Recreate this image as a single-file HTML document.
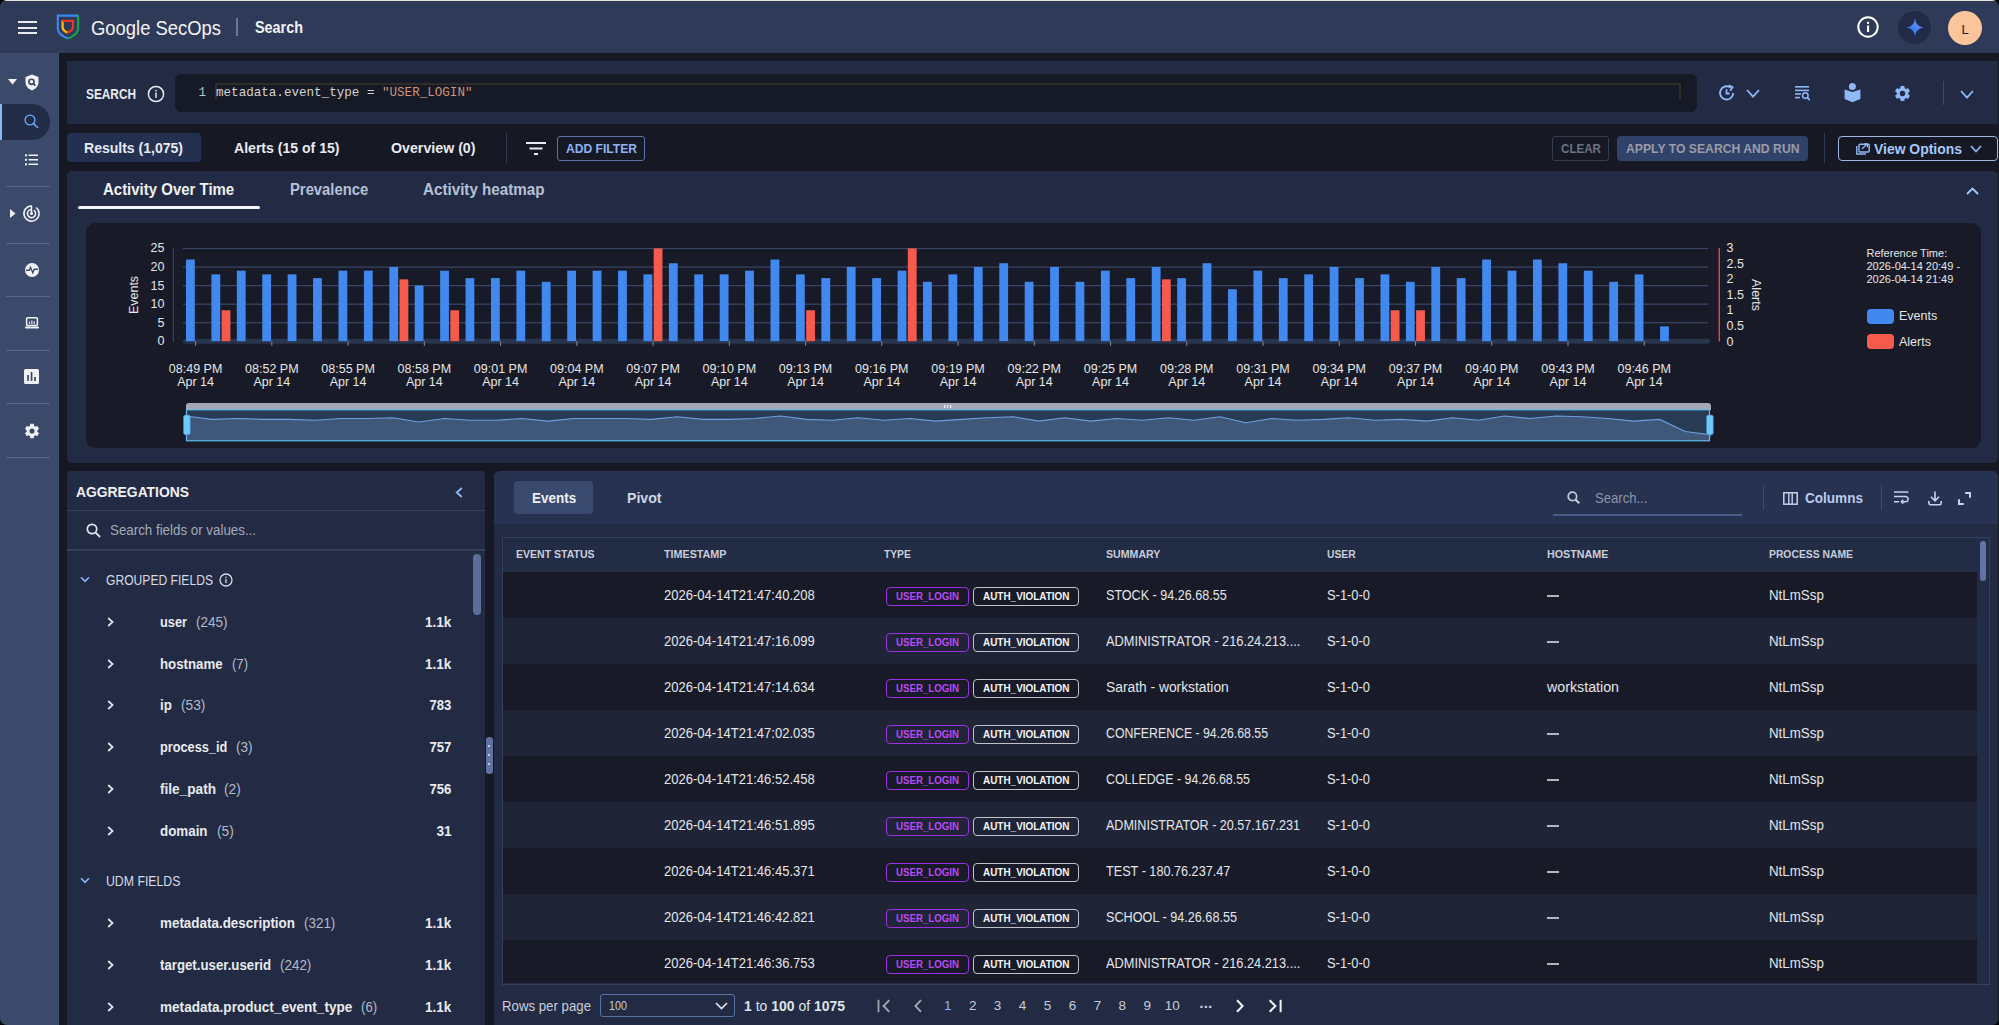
<!DOCTYPE html>
<html><head><meta charset="utf-8"><title>Google SecOps Search</title>
<style>
html,body{margin:0;padding:0;background:#000;width:1999px;height:1025px;overflow:hidden;}
.a{position:absolute;}
#app{position:absolute;left:0;top:0;width:1999px;height:1025px;overflow:hidden;border-radius:7px;background:#161824;font-family:'Liberation Sans', sans-serif;}
svg{position:absolute;overflow:visible;}
</style></head><body><div id="app">
<div class="a" style="left:0px;top:0px;width:1999px;height:1px;background:#e6e6e0;"></div>
<div class="a" style="left:0px;top:1px;width:1999px;height:52px;background:#2e3a58;"></div>
<div class="a" style="left:17.5px;top:21px;width:19px;height:2px;background:#e8eaf0;"></div>
<div class="a" style="left:17.5px;top:26.5px;width:19px;height:2px;background:#e8eaf0;"></div>
<div class="a" style="left:17.5px;top:31.5px;width:19px;height:2px;background:#e8eaf0;"></div>
<svg style="left:52px;top:10px" width="32" height="34" viewBox="0 0 32 34">
<path d="M15.9 28.6 C10.8 26.6 5.8 23 5.8 18.6 V5.6 H25.6" stroke="#3d86f5" stroke-width="2.1" fill="none"/>
<path d="M26 4.6 V18.6 C26 23 21 26.6 15.9 28.6" stroke="#0fa84a" stroke-width="2.1" fill="none"/>
<path d="M10.6 10 V17.2 C10.6 19.6 12.5 21.3 15.8 22.6" stroke="#fbbc04" stroke-width="2.3" fill="none"/>
<path d="M10.4 10.9 H20.9 V17.2 C20.9 19.6 18.7 21.3 15.2 22.8" stroke="#ee3228" stroke-width="2.3" fill="none"/>
</svg>
<div class="a" style="left:91px;top:14.50px;height:26px;line-height:26px;font-size:20px;font-weight:400;color:#f2f3f5;font-family:'Liberation Sans', sans-serif;white-space:nowrap;transform:scaleX(0.9207);transform-origin:left center;">Google SecOps</div>
<div class="a" style="left:236px;top:18px;width:1.5px;height:18px;background:#6a7796;"></div>
<div class="a" style="left:255px;top:16.50px;height:22px;line-height:22px;font-size:17px;font-weight:700;color:#f2f3f5;font-family:'Liberation Sans', sans-serif;white-space:nowrap;transform:scaleX(0.8465);transform-origin:left center;">Search</div>
<svg style="left:1857px;top:16px" width="22" height="22" viewBox="0 0 22 22">
<circle cx="11" cy="11" r="9.7" stroke="#fff" stroke-width="2" fill="none"/>
<rect x="10" y="9.5" width="2.1" height="6.5" fill="#fff"/><rect x="10" y="5.8" width="2.1" height="2.1" fill="#fff"/></svg>
<div class="a" style="left:1898px;top:11px;width:33px;height:33px;background:#222b46;border-radius:17px;"></div>
<svg style="left:1906px;top:18px" width="18" height="19" viewBox="0 0 18 19">
<defs><linearGradient id="gg" x1="0" y1="1" x2="1" y2="0"><stop offset="0.35" stop-color="#2f7cf6"/><stop offset="0.65" stop-color="#5f8af7"/><stop offset="1" stop-color="#c49af0"/></linearGradient></defs>
<path d="M9 0 C9.6 5.5 12 8.6 17.5 9.5 C12 10.4 9.6 13.5 9 19 C8.4 13.5 6 10.4 0.5 9.5 C6 8.6 8.4 5.5 9 0Z" fill="url(#gg)"/></svg>
<div class="a" style="left:1948px;top:10.5px;width:34px;height:34px;background:#fcc49a;border-radius:17px;"></div>
<div class="a" style="left:1465px;width:1000px;text-align:center;top:19.50px;height:17px;"><span style="display:inline-block;line-height:17px;font-size:13px;font-weight:400;color:#1a1a1a;font-family:'Liberation Sans', sans-serif;white-space:nowrap;">L</span></div>
<div class="a" style="left:0px;top:53px;width:58.6px;height:972px;background:#3b496b;"></div>
<div class="a" style="left:67px;top:61px;width:1931px;height:62.8px;background:#222b43;border-radius:1px;"></div>
<svg style="left:8px;top:79px" width="9" height="6" viewBox="0 0 9 6"><path d="M0 0H9L4.5 5.5Z" fill="#f0f2f7"/></svg>
<svg style="left:25px;top:74px" width="14" height="17" viewBox="0 0 14 17">
<path d="M7 0.5 L13.5 3 V8 C13.5 12 10.8 15 7 16.5 C3.2 15 0.5 12 0.5 8 V3 Z" fill="#f0f2f7"/>
<circle cx="6.5" cy="7.8" r="2.6" stroke="#3b496b" stroke-width="1.6" fill="none"/>
<path d="M8.3 9.6 L10.3 11.6" stroke="#3b496b" stroke-width="1.7"/></svg>
<div class="a" style="left:0px;top:103.5px;width:50px;height:36px;background:#222c46;border-radius:0 18px 18px 0;"></div>
<div class="a" style="left:0px;top:103.5px;width:1.5px;height:36px;background:#8ab4f8;"></div>
<svg style="left:24px;top:114px" width="15" height="15" viewBox="0 0 15 15">
<circle cx="6" cy="6" r="4.9" stroke="#6aa5f8" stroke-width="1.4" fill="none"/>
<path d="M9.6 9.6 L14 14" stroke="#6aa5f8" stroke-width="1.5"/></svg>
<svg style="left:25px;top:154px" width="13" height="12" viewBox="0 0 13 12">
<rect x="0" y="0.3" width="2" height="2" fill="#f0f2f7"/><rect x="3.5" y="0.5" width="9.5" height="1.5" fill="#f0f2f7"/>
<rect x="0" y="4.8" width="2" height="2" fill="#f0f2f7"/><rect x="3.5" y="5" width="9.5" height="1.5" fill="#f0f2f7"/>
<rect x="0" y="9.3" width="2" height="2" fill="#f0f2f7"/><rect x="3.5" y="9.5" width="9.5" height="1.5" fill="#f0f2f7"/></svg>
<div class="a" style="left:6px;top:186px;width:44px;height:1.3px;background:#55658e;"></div>
<div class="a" style="left:6px;top:242.5px;width:44px;height:1.3px;background:#55658e;"></div>
<div class="a" style="left:6px;top:296px;width:44px;height:1.3px;background:#55658e;"></div>
<div class="a" style="left:6px;top:349.5px;width:44px;height:1.3px;background:#55658e;"></div>
<div class="a" style="left:6px;top:403px;width:44px;height:1.3px;background:#55658e;"></div>
<div class="a" style="left:6px;top:456.5px;width:44px;height:1.3px;background:#55658e;"></div>
<svg style="left:10px;top:209px" width="6" height="9" viewBox="0 0 6 9"><path d="M0 0V9L5.5 4.5Z" fill="#f0f2f7"/></svg>
<svg style="left:22.75px;top:205px" width="17" height="17" viewBox="0 0 17 17">
<path d="M13.18 2.51 A7.6 7.6 0 1 1 8.50 0.90" stroke="#f0f2f7" stroke-width="1.5" fill="none"/>
<path d="M10.85 5.14 A4.1 4.1 0 1 1 8.50 4.40" stroke="#f0f2f7" stroke-width="1.5" fill="none"/>
<circle cx="8.5" cy="8.5" r="1.5" fill="#f0f2f7"/><path d="M8.5 8.5 V0.6" stroke="#f0f2f7" stroke-width="1.4"/></svg>
<svg style="left:24.5px;top:263px" width="14" height="14" viewBox="0 0 14 14">
<circle cx="7" cy="7" r="7" fill="#f0f2f7"/>
<path d="M1 7.3 H4.2 L5.6 4.5 L7.8 9.8 L9.3 6.3 H13" stroke="#3b496b" stroke-width="1.4" fill="none"/></svg>
<svg style="left:24.5px;top:317px" width="14" height="12" viewBox="0 0 14 12">
<rect x="1.6" y="0.8" width="10.8" height="7.6" rx="1" stroke="#f0f2f7" stroke-width="1.5" fill="none"/>
<rect x="4" y="4.6" width="1.1" height="2.5" fill="#f0f2f7"/><rect x="6.3" y="3.4" width="1.1" height="3.7" fill="#f0f2f7"/><rect x="8.6" y="4.2" width="1.1" height="2.9" fill="#f0f2f7"/>
<rect x="0" y="9.6" width="14" height="1.8" rx="0.9" fill="#f0f2f7"/></svg>
<svg style="left:24px;top:369px" width="15" height="15" viewBox="0 0 15 15">
<rect x="0" y="0" width="15" height="15" rx="1.5" fill="#f0f2f7"/>
<rect x="3.2" y="6" width="1.7" height="6" fill="#3b496b"/><rect x="6.7" y="3" width="1.7" height="9" fill="#3b496b"/><rect x="10.2" y="8" width="1.7" height="4" fill="#3b496b"/></svg>
<svg style="left:22.5px;top:421.5px" width="18" height="18" viewBox="0 0 24 24">
<path fill="#f0f2f7" d="M19.14 12.94c.04-.3.06-.61.06-.94 0-.32-.02-.64-.07-.94l2.03-1.58c.18-.14.23-.41.12-.61l-1.92-3.32c-.12-.22-.37-.29-.59-.22l-2.39.96c-.5-.38-1.03-.7-1.62-.94l-.36-2.54c-.04-.24-.24-.41-.48-.41h-3.84c-.24 0-.43.17-.47.41l-.36 2.54c-.59.24-1.13.57-1.62.94l-2.39-.96c-.22-.08-.47 0-.59.22L2.74 8.87c-.12.21-.08.47.12.61l2.03 1.58c-.05.3-.09.63-.09.94s.02.64.07.94l-2.03 1.58c-.18.14-.23.41-.12.61l1.92 3.32c.12.22.37.29.59.22l2.39-.96c.5.38 1.03.7 1.62.94l.36 2.54c.05.24.24.41.48.41h3.84c.24 0 .44-.17.47-.41l.36-2.54c.59-.24 1.13-.56 1.62-.94l2.39.96c.22.08.47 0 .59-.22l1.92-3.32c.12-.22.07-.47-.12-.61l-2.01-1.58z"/>
<circle cx="12" cy="12" r="3.4" fill="#3b496b"/></svg>
<div class="a" style="left:86px;top:84.50px;height:18px;line-height:18px;font-size:14px;font-weight:700;color:#e8eaf0;font-family:'Liberation Sans', sans-serif;white-space:nowrap;transform:scaleX(0.8457);transform-origin:left center;">SEARCH</div>
<svg style="left:146.5px;top:84.5px" width="18" height="18" viewBox="0 0 18 18">
<circle cx="9" cy="9" r="7.6" stroke="#e8eaf0" stroke-width="1.5" fill="none"/>
<rect x="8.25" y="7.6" width="1.5" height="5.2" fill="#e8eaf0"/><rect x="8.25" y="4.9" width="1.5" height="1.6" fill="#e8eaf0"/></svg>
<div class="a" style="left:174.5px;top:74.2px;width:1522.5px;height:37.4px;background:#161a26;border-radius:6px;"></div>
<div class="a" style="left:198.5px;top:85.00px;height:16px;line-height:16px;font-size:12.6px;font-weight:400;color:#b8bcc6;font-family:'Liberation Mono', monospace;white-space:nowrap;">1</div>
<div class="a" style="left:215.3px;top:83px;width:1466px;height:16.5px;box-sizing:border-box;border:2px solid #2f2d28;border-bottom:none;"></div>
<div class="a" style="left:216px;top:85.20px;height:16px;line-height:16px;font-size:12.6px;font-weight:400;color:#d4d4d4;font-family:'Liberation Mono', monospace;white-space:nowrap;transform:scaleX(0.9982);transform-origin:left center;">metadata.event_type = <span style="color:#ce9178">"USER_LOGIN"</span></div>
<svg style="left:1718px;top:84px" width="18" height="18" viewBox="0 0 18 18">
<path d="M15.2 9 A6.6 6.6 0 1 1 12.6 3.7" stroke="#8fb8f8" stroke-width="1.9" fill="none"/>
<path d="M10.6 1.2 L14.6 3.2 L12.2 6.8" stroke="#8fb8f8" stroke-width="1.8" fill="none"/>
<path d="M8.5 5.2 V9.5 H11.6" stroke="#8fb8f8" stroke-width="1.8" fill="none"/></svg>
<svg style="left:1745.5px;top:88.5px" width="14" height="9.700000000000001" viewBox="0 0 14 9.700000000000001"><path d="M1 1 L7.0 7.700000000000001 L13 1" stroke="#8fb8f8" stroke-width="1.8" fill="none"/></svg>
<svg style="left:1795px;top:86px" width="16" height="15" viewBox="0 0 16 15">
<rect x="0" y="0" width="14" height="1.6" fill="#8fb8f8"/><rect x="0" y="3.6" width="14" height="1.6" fill="#8fb8f8"/>
<rect x="0" y="7.2" width="6" height="1.6" fill="#8fb8f8"/><rect x="0" y="10.8" width="5" height="1.6" fill="#8fb8f8"/>
<circle cx="10.3" cy="9.6" r="2.8" stroke="#8fb8f8" stroke-width="1.5" fill="none"/><path d="M12.3 11.6 L14.8 14.1" stroke="#8fb8f8" stroke-width="1.6"/></svg>
<svg style="left:1844px;top:82px" width="17" height="21" viewBox="0 0 17 21">
<circle cx="8.4" cy="4.6" r="3.5" fill="#8fb8f8"/>
<path d="M0.6 7.6 L8.4 10 L16.4 7.6 V17 L8.4 20.2 L0.6 17 Z" fill="#8fb8f8"/></svg>
<svg style="left:1893px;top:84px" width="19" height="19" viewBox="0 0 24 24">
<path fill="#8fb8f8" d="M19.14 12.94c.04-.3.06-.61.06-.94 0-.32-.02-.64-.07-.94l2.03-1.58c.18-.14.23-.41.12-.61l-1.92-3.32c-.12-.22-.37-.29-.59-.22l-2.39.96c-.5-.38-1.03-.7-1.62-.94l-.36-2.54c-.04-.24-.24-.41-.48-.41h-3.84c-.24 0-.43.17-.47.41l-.36 2.54c-.59.24-1.13.57-1.62.94l-2.39-.96c-.22-.08-.47 0-.59.22L2.74 8.87c-.12.21-.08.47.12.61l2.03 1.58c-.05.3-.09.63-.09.94s.02.64.07.94l-2.03 1.58c-.18.14-.23.41-.12.61l1.92 3.32c.12.22.37.29.59.22l2.39-.96c.5.38 1.03.7 1.62.94l.36 2.54c.05.24.24.41.48.41h3.84c.24 0 .44-.17.47-.41l.36-2.54c.59-.24 1.13-.56 1.62-.94l2.39.96c.22.08.47 0 .59-.22l1.92-3.32c.12-.22.07-.47-.12-.61l-2.01-1.58z"/>
<circle cx="12" cy="12" r="3.4" fill="#222b43"/></svg>
<div class="a" style="left:1943px;top:80.5px;width:1px;height:24px;background:#3a4766;"></div>
<svg style="left:1960px;top:89.8px" width="14" height="9.700000000000001" viewBox="0 0 14 9.700000000000001"><path d="M1 1 L7.0 7.700000000000001 L13 1" stroke="#8fb8f8" stroke-width="1.8" fill="none"/></svg>
<div class="a" style="left:67px;top:133px;width:133.5px;height:28.7px;background:#243050;border-radius:4px;"></div>
<div class="a" style="left:84px;top:138.50px;height:18px;line-height:18px;font-size:14px;font-weight:700;color:#e8eaf0;font-family:'Liberation Sans', sans-serif;white-space:nowrap;transform:scaleX(1.0017);transform-origin:left center;">Results (1,075)</div>
<div class="a" style="left:233.5px;top:138.50px;height:18px;line-height:18px;font-size:14px;font-weight:700;color:#e8eaf0;font-family:'Liberation Sans', sans-serif;white-space:nowrap;transform:scaleX(1.0043);transform-origin:left center;">Alerts (15 of 15)</div>
<div class="a" style="left:390.5px;top:138.50px;height:18px;line-height:18px;font-size:14px;font-weight:700;color:#e8eaf0;font-family:'Liberation Sans', sans-serif;white-space:nowrap;transform:scaleX(1.0148);transform-origin:left center;">Overview (0)</div>
<div class="a" style="left:506px;top:133px;width:1px;height:30px;background:#2e3852;"></div>
<svg style="left:526px;top:142px" width="20" height="14" viewBox="0 0 20 14">
<rect x="0" y="0" width="20" height="2" fill="#e8eaf0"/><rect x="3.5" y="5.5" width="13" height="2" fill="#e8eaf0"/><rect x="8" y="11" width="4" height="2" fill="#e8eaf0"/></svg>
<div class="a" style="left:557px;top:136px;width:88px;height:25px;border-radius:3px;box-sizing:border-box;border:1px solid #5b72a8;"></div>
<div class="a" style="left:565.5px;top:140.00px;height:17px;line-height:17px;font-size:13px;font-weight:700;color:#8fb4f5;font-family:'Liberation Sans', sans-serif;white-space:nowrap;transform:scaleX(0.9304);transform-origin:left center;">ADD FILTER</div>
<div class="a" style="left:1552px;top:136px;width:57px;height:25px;border-radius:3px;box-sizing:border-box;border:1px solid #343c50;"></div>
<div class="a" style="left:1560.5px;top:140.00px;height:17px;line-height:17px;font-size:13px;font-weight:700;color:#6b7386;font-family:'Liberation Sans', sans-serif;white-space:nowrap;transform:scaleX(0.8932);transform-origin:left center;">CLEAR</div>
<div class="a" style="left:1617px;top:136px;width:190.5px;height:25px;background:#30416a;border-radius:4px;"></div>
<div class="a" style="left:1625.5px;top:140.00px;height:17px;line-height:17px;font-size:13px;font-weight:700;color:#9a9ca8;font-family:'Liberation Sans', sans-serif;white-space:nowrap;transform:scaleX(0.9382);transform-origin:left center;">APPLY TO SEARCH AND RUN</div>
<div class="a" style="left:1824px;top:132.5px;width:1px;height:30.5px;background:#2e3852;"></div>
<div class="a" style="left:1838px;top:136px;width:159.5px;height:25px;border-radius:4px;box-sizing:border-box;border:1.2px solid #9fb5e2;"></div>
<svg style="left:1856px;top:141.5px" width="14" height="13" viewBox="0 0 14 13">
<path d="M0.8 4 V12 H10" stroke="#8fb8f8" stroke-width="1.4" fill="none"/>
<rect x="3" y="2.2" width="10.2" height="7.8" rx="1" stroke="#8fb8f8" stroke-width="1.4" fill="none"/>
<path d="M6 7 L10.5 2.5 M8 2 H11.5 V5.5" stroke="#8fb8f8" stroke-width="1.3" fill="none"/></svg>
<div class="a" style="left:1874px;top:139.50px;height:18px;line-height:18px;font-size:14px;font-weight:700;color:#a8c7fa;font-family:'Liberation Sans', sans-serif;white-space:nowrap;transform:scaleX(0.9951);transform-origin:left center;">View Options</div>
<svg style="left:1969.5px;top:144.5px" width="12" height="8.600000000000001" viewBox="0 0 12 8.600000000000001"><path d="M1 1 L6.0 6.6000000000000005 L11 1" stroke="#8fb8f8" stroke-width="1.7" fill="none"/></svg>
<div class="a" style="left:67px;top:170.9px;width:1931px;height:292.5px;background:#222b43;border-radius:5px;"></div>
<div class="a" style="left:103.3px;top:178.50px;height:21px;line-height:21px;font-size:16px;font-weight:700;color:#eef0f5;font-family:'Liberation Sans', sans-serif;white-space:nowrap;transform:scaleX(0.9357);transform-origin:left center;">Activity Over Time</div>
<div class="a" style="left:289.8px;top:178.50px;height:21px;line-height:21px;font-size:16px;font-weight:700;color:#b6c0d6;font-family:'Liberation Sans', sans-serif;white-space:nowrap;transform:scaleX(0.9253);transform-origin:left center;">Prevalence</div>
<div class="a" style="left:423px;top:178.50px;height:21px;line-height:21px;font-size:16px;font-weight:700;color:#b6c0d6;font-family:'Liberation Sans', sans-serif;white-space:nowrap;transform:scaleX(0.9489);transform-origin:left center;">Activity heatmap</div>
<div class="a" style="left:78px;top:205.5px;width:182px;height:3.4px;background:#f4f5f8;border-radius:2px;"></div>
<svg style="left:1965.8px;top:186.5px" width="13" height="8" viewBox="0 0 13 8"><path d="M1 7 L6.5 1.5 L12 7" stroke="#a8c7fa" stroke-width="1.9" fill="none"/></svg>
<div class="a" style="left:85.5px;top:223px;width:1895px;height:225px;background:#181b27;border-radius:9px;"></div>
<svg style="left:0;top:0" width="1999" height="1025" viewBox="0 0 1999 1025"><rect x="183" y="322.14" width="1525" height="1.2" fill="#3a4768"/><rect x="183" y="303.58" width="1525" height="1.2" fill="#3a4768"/><rect x="183" y="285.02" width="1525" height="1.2" fill="#3a4768"/><rect x="183" y="266.46" width="1525" height="1.2" fill="#3a4768"/><rect x="183" y="247.90" width="1525" height="1.2" fill="#3a4768"/><rect x="172.8" y="248" width="1.1" height="93.5" fill="#3a4768"/><rect x="1718.6" y="248" width="1.4" height="93.5" fill="#e8453c"/><rect x="183" y="338.8" width="1527" height="5" rx="2.5" fill="#29344d"/><rect x="186.00" y="259.54" width="8.8" height="81.66" fill="#4189ee"/><rect x="195.10" y="341" width="1" height="5" fill="#7d8496"/><rect x="211.41" y="274.38" width="8.8" height="66.82" fill="#4189ee"/><rect x="221.61" y="310.27" width="8.8" height="30.93" fill="#f65a4c"/><rect x="236.83" y="270.67" width="8.8" height="70.53" fill="#4189ee"/><rect x="262.25" y="274.38" width="8.8" height="66.82" fill="#4189ee"/><rect x="271.35" y="341" width="1" height="5" fill="#7d8496"/><rect x="287.66" y="274.38" width="8.8" height="66.82" fill="#4189ee"/><rect x="313.07" y="278.10" width="8.8" height="63.10" fill="#4189ee"/><rect x="338.49" y="270.67" width="8.8" height="70.53" fill="#4189ee"/><rect x="347.59" y="341" width="1" height="5" fill="#7d8496"/><rect x="363.90" y="270.67" width="8.8" height="70.53" fill="#4189ee"/><rect x="389.32" y="266.96" width="8.8" height="74.24" fill="#4189ee"/><rect x="399.52" y="279.33" width="8.8" height="61.87" fill="#f65a4c"/><rect x="414.73" y="285.52" width="8.8" height="55.68" fill="#4189ee"/><rect x="423.83" y="341" width="1" height="5" fill="#7d8496"/><rect x="440.15" y="270.67" width="8.8" height="70.53" fill="#4189ee"/><rect x="450.35" y="310.27" width="8.8" height="30.93" fill="#f65a4c"/><rect x="465.56" y="278.10" width="8.8" height="63.10" fill="#4189ee"/><rect x="490.98" y="278.10" width="8.8" height="63.10" fill="#4189ee"/><rect x="500.08" y="341" width="1" height="5" fill="#7d8496"/><rect x="516.39" y="270.67" width="8.8" height="70.53" fill="#4189ee"/><rect x="541.81" y="281.81" width="8.8" height="59.39" fill="#4189ee"/><rect x="567.22" y="270.67" width="8.8" height="70.53" fill="#4189ee"/><rect x="576.32" y="341" width="1" height="5" fill="#7d8496"/><rect x="592.64" y="270.67" width="8.8" height="70.53" fill="#4189ee"/><rect x="618.05" y="270.67" width="8.8" height="70.53" fill="#4189ee"/><rect x="643.47" y="274.38" width="8.8" height="66.82" fill="#4189ee"/><rect x="653.67" y="248.40" width="8.8" height="92.80" fill="#f65a4c"/><rect x="652.57" y="341" width="1" height="5" fill="#7d8496"/><rect x="668.88" y="263.25" width="8.8" height="77.95" fill="#4189ee"/><rect x="694.30" y="274.38" width="8.8" height="66.82" fill="#4189ee"/><rect x="719.72" y="274.38" width="8.8" height="66.82" fill="#4189ee"/><rect x="728.82" y="341" width="1" height="5" fill="#7d8496"/><rect x="745.13" y="270.67" width="8.8" height="70.53" fill="#4189ee"/><rect x="770.54" y="259.54" width="8.8" height="81.66" fill="#4189ee"/><rect x="795.96" y="274.38" width="8.8" height="66.82" fill="#4189ee"/><rect x="806.16" y="310.27" width="8.8" height="30.93" fill="#f65a4c"/><rect x="805.06" y="341" width="1" height="5" fill="#7d8496"/><rect x="821.38" y="278.10" width="8.8" height="63.10" fill="#4189ee"/><rect x="846.79" y="266.96" width="8.8" height="74.24" fill="#4189ee"/><rect x="872.20" y="278.10" width="8.8" height="63.10" fill="#4189ee"/><rect x="881.30" y="341" width="1" height="5" fill="#7d8496"/><rect x="897.62" y="270.67" width="8.8" height="70.53" fill="#4189ee"/><rect x="907.82" y="248.40" width="8.8" height="92.80" fill="#f65a4c"/><rect x="923.03" y="281.81" width="8.8" height="59.39" fill="#4189ee"/><rect x="948.45" y="274.38" width="8.8" height="66.82" fill="#4189ee"/><rect x="957.55" y="341" width="1" height="5" fill="#7d8496"/><rect x="973.87" y="266.96" width="8.8" height="74.24" fill="#4189ee"/><rect x="999.28" y="263.25" width="8.8" height="77.95" fill="#4189ee"/><rect x="1024.69" y="281.81" width="8.8" height="59.39" fill="#4189ee"/><rect x="1033.79" y="341" width="1" height="5" fill="#7d8496"/><rect x="1050.11" y="266.96" width="8.8" height="74.24" fill="#4189ee"/><rect x="1075.53" y="281.81" width="8.8" height="59.39" fill="#4189ee"/><rect x="1100.94" y="270.67" width="8.8" height="70.53" fill="#4189ee"/><rect x="1110.04" y="341" width="1" height="5" fill="#7d8496"/><rect x="1126.36" y="278.10" width="8.8" height="63.10" fill="#4189ee"/><rect x="1151.77" y="266.96" width="8.8" height="74.24" fill="#4189ee"/><rect x="1161.97" y="279.33" width="8.8" height="61.87" fill="#f65a4c"/><rect x="1177.18" y="278.10" width="8.8" height="63.10" fill="#4189ee"/><rect x="1186.28" y="341" width="1" height="5" fill="#7d8496"/><rect x="1202.60" y="263.25" width="8.8" height="77.95" fill="#4189ee"/><rect x="1228.01" y="289.23" width="8.8" height="51.97" fill="#4189ee"/><rect x="1253.43" y="270.67" width="8.8" height="70.53" fill="#4189ee"/><rect x="1262.53" y="341" width="1" height="5" fill="#7d8496"/><rect x="1278.85" y="278.10" width="8.8" height="63.10" fill="#4189ee"/><rect x="1304.26" y="274.38" width="8.8" height="66.82" fill="#4189ee"/><rect x="1329.67" y="266.96" width="8.8" height="74.24" fill="#4189ee"/><rect x="1338.77" y="341" width="1" height="5" fill="#7d8496"/><rect x="1355.09" y="278.10" width="8.8" height="63.10" fill="#4189ee"/><rect x="1380.50" y="274.38" width="8.8" height="66.82" fill="#4189ee"/><rect x="1390.70" y="310.27" width="8.8" height="30.93" fill="#f65a4c"/><rect x="1405.92" y="281.81" width="8.8" height="59.39" fill="#4189ee"/><rect x="1416.12" y="310.27" width="8.8" height="30.93" fill="#f65a4c"/><rect x="1415.02" y="341" width="1" height="5" fill="#7d8496"/><rect x="1431.34" y="266.96" width="8.8" height="74.24" fill="#4189ee"/><rect x="1456.75" y="278.10" width="8.8" height="63.10" fill="#4189ee"/><rect x="1482.16" y="259.54" width="8.8" height="81.66" fill="#4189ee"/><rect x="1491.26" y="341" width="1" height="5" fill="#7d8496"/><rect x="1507.58" y="270.67" width="8.8" height="70.53" fill="#4189ee"/><rect x="1532.99" y="259.54" width="8.8" height="81.66" fill="#4189ee"/><rect x="1558.41" y="263.25" width="8.8" height="77.95" fill="#4189ee"/><rect x="1567.51" y="341" width="1" height="5" fill="#7d8496"/><rect x="1583.83" y="270.67" width="8.8" height="70.53" fill="#4189ee"/><rect x="1609.24" y="281.81" width="8.8" height="59.39" fill="#4189ee"/><rect x="1634.65" y="274.38" width="8.8" height="66.82" fill="#4189ee"/><rect x="1643.75" y="341" width="1" height="5" fill="#7d8496"/><rect x="1660.07" y="326.35" width="8.8" height="14.85" fill="#4189ee"/></svg>
<div class="a" style="right:1834.5px;top:334.20px;height:14px;line-height:14px;font-size:12.5px;font-weight:400;color:#e6e6e6;font-family:'Liberation Sans', sans-serif;white-space:nowrap;">0</div>
<div class="a" style="right:1834.5px;top:315.64px;height:14px;line-height:14px;font-size:12.5px;font-weight:400;color:#e6e6e6;font-family:'Liberation Sans', sans-serif;white-space:nowrap;">5</div>
<div class="a" style="right:1834.5px;top:297.08px;height:14px;line-height:14px;font-size:12.5px;font-weight:400;color:#e6e6e6;font-family:'Liberation Sans', sans-serif;white-space:nowrap;">10</div>
<div class="a" style="right:1834.5px;top:278.52px;height:14px;line-height:14px;font-size:12.5px;font-weight:400;color:#e6e6e6;font-family:'Liberation Sans', sans-serif;white-space:nowrap;">15</div>
<div class="a" style="right:1834.5px;top:259.96px;height:14px;line-height:14px;font-size:12.5px;font-weight:400;color:#e6e6e6;font-family:'Liberation Sans', sans-serif;white-space:nowrap;">20</div>
<div class="a" style="right:1834.5px;top:241.40px;height:14px;line-height:14px;font-size:12.5px;font-weight:400;color:#e6e6e6;font-family:'Liberation Sans', sans-serif;white-space:nowrap;">25</div>
<div class="a" style="left:1726.5px;top:334.50px;height:14px;line-height:14px;font-size:12.5px;font-weight:400;color:#e6e6e6;font-family:'Liberation Sans', sans-serif;white-space:nowrap;">0</div>
<div class="a" style="left:1726.5px;top:318.95px;height:14px;line-height:14px;font-size:12.5px;font-weight:400;color:#e6e6e6;font-family:'Liberation Sans', sans-serif;white-space:nowrap;">0.5</div>
<div class="a" style="left:1726.5px;top:303.40px;height:14px;line-height:14px;font-size:12.5px;font-weight:400;color:#e6e6e6;font-family:'Liberation Sans', sans-serif;white-space:nowrap;">1</div>
<div class="a" style="left:1726.5px;top:287.85px;height:14px;line-height:14px;font-size:12.5px;font-weight:400;color:#e6e6e6;font-family:'Liberation Sans', sans-serif;white-space:nowrap;">1.5</div>
<div class="a" style="left:1726.5px;top:272.30px;height:14px;line-height:14px;font-size:12.5px;font-weight:400;color:#e6e6e6;font-family:'Liberation Sans', sans-serif;white-space:nowrap;">2</div>
<div class="a" style="left:1726.5px;top:256.75px;height:14px;line-height:14px;font-size:12.5px;font-weight:400;color:#e6e6e6;font-family:'Liberation Sans', sans-serif;white-space:nowrap;">2.5</div>
<div class="a" style="left:1726.5px;top:241.20px;height:14px;line-height:14px;font-size:12.5px;font-weight:400;color:#e6e6e6;font-family:'Liberation Sans', sans-serif;white-space:nowrap;">3</div>
<div class="a" style="left:94px;top:287px;width:80px;height:16px;line-height:16px;text-align:center;font-size:12.5px;color:#e6e6e6;transform:rotate(-90deg);">Events</div>
<div class="a" style="left:1716px;top:287px;width:80px;height:16px;line-height:16px;text-align:center;font-size:12.5px;color:#e6e6e6;transform:rotate(90deg);">Alerts</div>
<div class="a" style="left:-304.4px;width:1000px;text-align:center;top:358.80px;height:14px;"><span style="display:inline-block;line-height:14px;font-size:12.5px;font-weight:400;color:#e6e6e6;font-family:'Liberation Sans', sans-serif;white-space:nowrap;">08:49 PM</span></div>
<div class="a" style="left:-304.4px;width:1000px;text-align:center;top:372.00px;height:14px;"><span style="display:inline-block;line-height:14px;font-size:12.5px;font-weight:400;color:#e6e6e6;font-family:'Liberation Sans', sans-serif;white-space:nowrap;">Apr 14</span></div>
<div class="a" style="left:-228.15499999999997px;width:1000px;text-align:center;top:358.80px;height:14px;"><span style="display:inline-block;line-height:14px;font-size:12.5px;font-weight:400;color:#e6e6e6;font-family:'Liberation Sans', sans-serif;white-space:nowrap;">08:52 PM</span></div>
<div class="a" style="left:-228.15499999999997px;width:1000px;text-align:center;top:372.00px;height:14px;"><span style="display:inline-block;line-height:14px;font-size:12.5px;font-weight:400;color:#e6e6e6;font-family:'Liberation Sans', sans-serif;white-space:nowrap;">Apr 14</span></div>
<div class="a" style="left:-151.90999999999997px;width:1000px;text-align:center;top:358.80px;height:14px;"><span style="display:inline-block;line-height:14px;font-size:12.5px;font-weight:400;color:#e6e6e6;font-family:'Liberation Sans', sans-serif;white-space:nowrap;">08:55 PM</span></div>
<div class="a" style="left:-151.90999999999997px;width:1000px;text-align:center;top:372.00px;height:14px;"><span style="display:inline-block;line-height:14px;font-size:12.5px;font-weight:400;color:#e6e6e6;font-family:'Liberation Sans', sans-serif;white-space:nowrap;">Apr 14</span></div>
<div class="a" style="left:-75.66500000000002px;width:1000px;text-align:center;top:358.80px;height:14px;"><span style="display:inline-block;line-height:14px;font-size:12.5px;font-weight:400;color:#e6e6e6;font-family:'Liberation Sans', sans-serif;white-space:nowrap;">08:58 PM</span></div>
<div class="a" style="left:-75.66500000000002px;width:1000px;text-align:center;top:372.00px;height:14px;"><span style="display:inline-block;line-height:14px;font-size:12.5px;font-weight:400;color:#e6e6e6;font-family:'Liberation Sans', sans-serif;white-space:nowrap;">Apr 14</span></div>
<div class="a" style="left:0.5800000000000409px;width:1000px;text-align:center;top:358.80px;height:14px;"><span style="display:inline-block;line-height:14px;font-size:12.5px;font-weight:400;color:#e6e6e6;font-family:'Liberation Sans', sans-serif;white-space:nowrap;">09:01 PM</span></div>
<div class="a" style="left:0.5800000000000409px;width:1000px;text-align:center;top:372.00px;height:14px;"><span style="display:inline-block;line-height:14px;font-size:12.5px;font-weight:400;color:#e6e6e6;font-family:'Liberation Sans', sans-serif;white-space:nowrap;">Apr 14</span></div>
<div class="a" style="left:76.82499999999993px;width:1000px;text-align:center;top:358.80px;height:14px;"><span style="display:inline-block;line-height:14px;font-size:12.5px;font-weight:400;color:#e6e6e6;font-family:'Liberation Sans', sans-serif;white-space:nowrap;">09:04 PM</span></div>
<div class="a" style="left:76.82499999999993px;width:1000px;text-align:center;top:372.00px;height:14px;"><span style="display:inline-block;line-height:14px;font-size:12.5px;font-weight:400;color:#e6e6e6;font-family:'Liberation Sans', sans-serif;white-space:nowrap;">Apr 14</span></div>
<div class="a" style="left:153.06999999999994px;width:1000px;text-align:center;top:358.80px;height:14px;"><span style="display:inline-block;line-height:14px;font-size:12.5px;font-weight:400;color:#e6e6e6;font-family:'Liberation Sans', sans-serif;white-space:nowrap;">09:07 PM</span></div>
<div class="a" style="left:153.06999999999994px;width:1000px;text-align:center;top:372.00px;height:14px;"><span style="display:inline-block;line-height:14px;font-size:12.5px;font-weight:400;color:#e6e6e6;font-family:'Liberation Sans', sans-serif;white-space:nowrap;">Apr 14</span></div>
<div class="a" style="left:229.31500000000005px;width:1000px;text-align:center;top:358.80px;height:14px;"><span style="display:inline-block;line-height:14px;font-size:12.5px;font-weight:400;color:#e6e6e6;font-family:'Liberation Sans', sans-serif;white-space:nowrap;">09:10 PM</span></div>
<div class="a" style="left:229.31500000000005px;width:1000px;text-align:center;top:372.00px;height:14px;"><span style="display:inline-block;line-height:14px;font-size:12.5px;font-weight:400;color:#e6e6e6;font-family:'Liberation Sans', sans-serif;white-space:nowrap;">Apr 14</span></div>
<div class="a" style="left:305.56000000000006px;width:1000px;text-align:center;top:358.80px;height:14px;"><span style="display:inline-block;line-height:14px;font-size:12.5px;font-weight:400;color:#e6e6e6;font-family:'Liberation Sans', sans-serif;white-space:nowrap;">09:13 PM</span></div>
<div class="a" style="left:305.56000000000006px;width:1000px;text-align:center;top:372.00px;height:14px;"><span style="display:inline-block;line-height:14px;font-size:12.5px;font-weight:400;color:#e6e6e6;font-family:'Liberation Sans', sans-serif;white-space:nowrap;">Apr 14</span></div>
<div class="a" style="left:381.80499999999995px;width:1000px;text-align:center;top:358.80px;height:14px;"><span style="display:inline-block;line-height:14px;font-size:12.5px;font-weight:400;color:#e6e6e6;font-family:'Liberation Sans', sans-serif;white-space:nowrap;">09:16 PM</span></div>
<div class="a" style="left:381.80499999999995px;width:1000px;text-align:center;top:372.00px;height:14px;"><span style="display:inline-block;line-height:14px;font-size:12.5px;font-weight:400;color:#e6e6e6;font-family:'Liberation Sans', sans-serif;white-space:nowrap;">Apr 14</span></div>
<div class="a" style="left:458.04999999999995px;width:1000px;text-align:center;top:358.80px;height:14px;"><span style="display:inline-block;line-height:14px;font-size:12.5px;font-weight:400;color:#e6e6e6;font-family:'Liberation Sans', sans-serif;white-space:nowrap;">09:19 PM</span></div>
<div class="a" style="left:458.04999999999995px;width:1000px;text-align:center;top:372.00px;height:14px;"><span style="display:inline-block;line-height:14px;font-size:12.5px;font-weight:400;color:#e6e6e6;font-family:'Liberation Sans', sans-serif;white-space:nowrap;">Apr 14</span></div>
<div class="a" style="left:534.2949999999998px;width:1000px;text-align:center;top:358.80px;height:14px;"><span style="display:inline-block;line-height:14px;font-size:12.5px;font-weight:400;color:#e6e6e6;font-family:'Liberation Sans', sans-serif;white-space:nowrap;">09:22 PM</span></div>
<div class="a" style="left:534.2949999999998px;width:1000px;text-align:center;top:372.00px;height:14px;"><span style="display:inline-block;line-height:14px;font-size:12.5px;font-weight:400;color:#e6e6e6;font-family:'Liberation Sans', sans-serif;white-space:nowrap;">Apr 14</span></div>
<div class="a" style="left:610.54px;width:1000px;text-align:center;top:358.80px;height:14px;"><span style="display:inline-block;line-height:14px;font-size:12.5px;font-weight:400;color:#e6e6e6;font-family:'Liberation Sans', sans-serif;white-space:nowrap;">09:25 PM</span></div>
<div class="a" style="left:610.54px;width:1000px;text-align:center;top:372.00px;height:14px;"><span style="display:inline-block;line-height:14px;font-size:12.5px;font-weight:400;color:#e6e6e6;font-family:'Liberation Sans', sans-serif;white-space:nowrap;">Apr 14</span></div>
<div class="a" style="left:686.7849999999999px;width:1000px;text-align:center;top:358.80px;height:14px;"><span style="display:inline-block;line-height:14px;font-size:12.5px;font-weight:400;color:#e6e6e6;font-family:'Liberation Sans', sans-serif;white-space:nowrap;">09:28 PM</span></div>
<div class="a" style="left:686.7849999999999px;width:1000px;text-align:center;top:372.00px;height:14px;"><span style="display:inline-block;line-height:14px;font-size:12.5px;font-weight:400;color:#e6e6e6;font-family:'Liberation Sans', sans-serif;white-space:nowrap;">Apr 14</span></div>
<div class="a" style="left:763.03px;width:1000px;text-align:center;top:358.80px;height:14px;"><span style="display:inline-block;line-height:14px;font-size:12.5px;font-weight:400;color:#e6e6e6;font-family:'Liberation Sans', sans-serif;white-space:nowrap;">09:31 PM</span></div>
<div class="a" style="left:763.03px;width:1000px;text-align:center;top:372.00px;height:14px;"><span style="display:inline-block;line-height:14px;font-size:12.5px;font-weight:400;color:#e6e6e6;font-family:'Liberation Sans', sans-serif;white-space:nowrap;">Apr 14</span></div>
<div class="a" style="left:839.2749999999999px;width:1000px;text-align:center;top:358.80px;height:14px;"><span style="display:inline-block;line-height:14px;font-size:12.5px;font-weight:400;color:#e6e6e6;font-family:'Liberation Sans', sans-serif;white-space:nowrap;">09:34 PM</span></div>
<div class="a" style="left:839.2749999999999px;width:1000px;text-align:center;top:372.00px;height:14px;"><span style="display:inline-block;line-height:14px;font-size:12.5px;font-weight:400;color:#e6e6e6;font-family:'Liberation Sans', sans-serif;white-space:nowrap;">Apr 14</span></div>
<div class="a" style="left:915.52px;width:1000px;text-align:center;top:358.80px;height:14px;"><span style="display:inline-block;line-height:14px;font-size:12.5px;font-weight:400;color:#e6e6e6;font-family:'Liberation Sans', sans-serif;white-space:nowrap;">09:37 PM</span></div>
<div class="a" style="left:915.52px;width:1000px;text-align:center;top:372.00px;height:14px;"><span style="display:inline-block;line-height:14px;font-size:12.5px;font-weight:400;color:#e6e6e6;font-family:'Liberation Sans', sans-serif;white-space:nowrap;">Apr 14</span></div>
<div class="a" style="left:991.7649999999999px;width:1000px;text-align:center;top:358.80px;height:14px;"><span style="display:inline-block;line-height:14px;font-size:12.5px;font-weight:400;color:#e6e6e6;font-family:'Liberation Sans', sans-serif;white-space:nowrap;">09:40 PM</span></div>
<div class="a" style="left:991.7649999999999px;width:1000px;text-align:center;top:372.00px;height:14px;"><span style="display:inline-block;line-height:14px;font-size:12.5px;font-weight:400;color:#e6e6e6;font-family:'Liberation Sans', sans-serif;white-space:nowrap;">Apr 14</span></div>
<div class="a" style="left:1068.0099999999998px;width:1000px;text-align:center;top:358.80px;height:14px;"><span style="display:inline-block;line-height:14px;font-size:12.5px;font-weight:400;color:#e6e6e6;font-family:'Liberation Sans', sans-serif;white-space:nowrap;">09:43 PM</span></div>
<div class="a" style="left:1068.0099999999998px;width:1000px;text-align:center;top:372.00px;height:14px;"><span style="display:inline-block;line-height:14px;font-size:12.5px;font-weight:400;color:#e6e6e6;font-family:'Liberation Sans', sans-serif;white-space:nowrap;">Apr 14</span></div>
<div class="a" style="left:1144.2549999999999px;width:1000px;text-align:center;top:358.80px;height:14px;"><span style="display:inline-block;line-height:14px;font-size:12.5px;font-weight:400;color:#e6e6e6;font-family:'Liberation Sans', sans-serif;white-space:nowrap;">09:46 PM</span></div>
<div class="a" style="left:1144.2549999999999px;width:1000px;text-align:center;top:372.00px;height:14px;"><span style="display:inline-block;line-height:14px;font-size:12.5px;font-weight:400;color:#e6e6e6;font-family:'Liberation Sans', sans-serif;white-space:nowrap;">Apr 14</span></div>
<div class="a" style="left:1866.5px;top:247.10px;height:13px;line-height:13px;font-size:11px;font-weight:400;color:#e6e6e6;font-family:'Liberation Sans', sans-serif;white-space:nowrap;">Reference Time:</div>
<div class="a" style="left:1866.5px;top:260.10px;height:13px;line-height:13px;font-size:11px;font-weight:400;color:#e6e6e6;font-family:'Liberation Sans', sans-serif;white-space:nowrap;">2026-04-14 20:49 -</div>
<div class="a" style="left:1866.5px;top:273.10px;height:13px;line-height:13px;font-size:11px;font-weight:400;color:#e6e6e6;font-family:'Liberation Sans', sans-serif;white-space:nowrap;">2026-04-14 21:49</div>
<div class="a" style="left:1867px;top:309px;width:26.5px;height:14.8px;background:#4189ee;border-radius:4px;"></div>
<div class="a" style="left:1899px;top:309.40px;height:14px;line-height:14px;font-size:12.5px;font-weight:400;color:#e6e6e6;font-family:'Liberation Sans', sans-serif;white-space:nowrap;">Events</div>
<div class="a" style="left:1867px;top:334px;width:26.5px;height:14.8px;background:#f65a4c;border-radius:4px;"></div>
<div class="a" style="left:1899px;top:334.50px;height:14px;line-height:14px;font-size:12.5px;font-weight:400;color:#e6e6e6;font-family:'Liberation Sans', sans-serif;white-space:nowrap;">Alerts</div>
<div class="a" style="left:185.8px;top:403px;width:1525px;height:6.8px;background:#a3a7b6;border-radius:3px 3px 0 0;"></div>
<svg style="left:944px;top:404.5px" width="8" height="4" viewBox="0 0 8 4"><rect x="0" y="0" width="1.2" height="3" fill="#eef0f6"/><rect x="3" y="0" width="1.2" height="3" fill="#eef0f6"/><rect x="6" y="0" width="1.2" height="3" fill="#eef0f6"/></svg>
<svg style="left:0;top:0" width="1999" height="1025" viewBox="0 0 1999 1025">
<rect x="186.5" y="410" width="1523" height="31" fill="#283b55"/>
<path d="M186.5 441 L186.0 416.0 L211.8 419.4 L237.7 418.5 L263.6 419.4 L289.4 419.4 L315.2 420.3 L341.1 418.5 L367.0 418.5 L392.8 417.7 L418.6 422.0 L444.5 418.5 L470.4 420.3 L496.2 420.3 L522.0 418.5 L547.9 421.1 L573.8 418.5 L599.6 418.5 L625.5 418.5 L651.3 419.4 L677.2 416.8 L703.0 419.4 L728.9 419.4 L754.7 418.5 L780.6 416.0 L806.4 419.4 L832.2 420.3 L858.1 417.7 L884.0 420.3 L909.8 418.5 L935.7 421.1 L961.5 419.4 L987.4 417.7 L1013.2 416.8 L1039.1 421.1 L1064.9 417.7 L1090.8 421.1 L1116.6 418.5 L1142.5 420.3 L1168.3 417.7 L1194.2 420.3 L1220.0 416.8 L1245.9 422.8 L1271.7 418.5 L1297.5 420.3 L1323.4 419.4 L1349.2 417.7 L1375.1 420.3 L1401.0 419.4 L1426.8 421.1 L1452.7 417.7 L1478.5 420.3 L1504.4 416.0 L1530.2 418.5 L1556.1 416.0 L1581.9 416.8 L1607.8 418.5 L1633.6 421.1 L1659.5 419.4 L1685.3 431.5 L1711.2 434.9 L1709.5 441 Z" fill="#3f5879"/>
<path d="M186.0 416.0 L211.8 419.4 L237.7 418.5 L263.6 419.4 L289.4 419.4 L315.2 420.3 L341.1 418.5 L367.0 418.5 L392.8 417.7 L418.6 422.0 L444.5 418.5 L470.4 420.3 L496.2 420.3 L522.0 418.5 L547.9 421.1 L573.8 418.5 L599.6 418.5 L625.5 418.5 L651.3 419.4 L677.2 416.8 L703.0 419.4 L728.9 419.4 L754.7 418.5 L780.6 416.0 L806.4 419.4 L832.2 420.3 L858.1 417.7 L884.0 420.3 L909.8 418.5 L935.7 421.1 L961.5 419.4 L987.4 417.7 L1013.2 416.8 L1039.1 421.1 L1064.9 417.7 L1090.8 421.1 L1116.6 418.5 L1142.5 420.3 L1168.3 417.7 L1194.2 420.3 L1220.0 416.8 L1245.9 422.8 L1271.7 418.5 L1297.5 420.3 L1323.4 419.4 L1349.2 417.7 L1375.1 420.3 L1401.0 419.4 L1426.8 421.1 L1452.7 417.7 L1478.5 420.3 L1504.4 416.0 L1530.2 418.5 L1556.1 416.0 L1581.9 416.8 L1607.8 418.5 L1633.6 421.1 L1659.5 419.4 L1685.3 431.5 L1711.2 434.9" stroke="#6c9fe0" stroke-width="1.1" fill="none"/>
<rect x="186.5" y="409.8" width="1523" height="31" stroke="#62b8ea" stroke-width="1.2" fill="none"/>
<rect x="183.5" y="415" width="6.8" height="19.8" rx="2" fill="#6ec8fa" stroke="#3d8ac0" stroke-width="0.6"/>
<rect x="1706.5" y="415" width="6.8" height="19.8" rx="2" fill="#6ec8fa" stroke="#3d8ac0" stroke-width="0.6"/>
</svg>
<div class="a" style="left:67px;top:471.3px;width:418px;height:560px;background:#222b43;border-radius:4px;"></div>
<div class="a" style="left:76.4px;top:481.80px;height:20px;line-height:20px;font-size:15px;font-weight:700;color:#eef0f5;font-family:'Liberation Sans', sans-serif;white-space:nowrap;transform:scaleX(0.9245);transform-origin:left center;">AGGREGATIONS</div>
<svg style="left:455px;top:486.5px" width="8" height="11" viewBox="0 0 8 11"><path d="M6.8 1 L1.8 5.5 L6.8 10" stroke="#8ab4f8" stroke-width="1.9" fill="none"/></svg>
<div class="a" style="left:67px;top:509.8px;width:418px;height:1.5px;background:#34405e;"></div>
<svg style="left:85.5px;top:522.5px" width="15" height="15" viewBox="0 0 15 15">
<circle cx="6" cy="6" r="4.7" stroke="#dfe3ea" stroke-width="1.7" fill="none"/><path d="M9.4 9.4 L14 14" stroke="#dfe3ea" stroke-width="1.9"/></svg>
<div class="a" style="left:110px;top:521.00px;height:18px;line-height:18px;font-size:14px;font-weight:400;color:#a3a9b8;font-family:'Liberation Sans', sans-serif;white-space:nowrap;transform:scaleX(0.9524);transform-origin:left center;">Search fields or values...</div>
<div class="a" style="left:67px;top:549px;width:418px;height:1.5px;background:#34405e;"></div>
<div class="a" style="left:472.8px;top:553.7px;width:8.2px;height:61px;background:#5d6d98;border-radius:4.1px;"></div>
<svg style="left:80px;top:576.0px" width="10" height="7" viewBox="0 0 10 7"><path d="M1 1.2 L5 5.4 L9 1.2" stroke="#8ab4f8" stroke-width="1.6" fill="none"/></svg>
<div class="a" style="left:105.7px;top:571.00px;height:18px;line-height:18px;font-size:14px;font-weight:400;color:#d6dae3;font-family:'Liberation Sans', sans-serif;white-space:nowrap;transform:scaleX(0.8650);transform-origin:left center;">GROUPED FIELDS</div>
<svg style="left:218.5px;top:573px" width="14" height="14" viewBox="0 0 14 14">
<circle cx="7" cy="7" r="6" stroke="#d6dae3" stroke-width="1.3" fill="none"/>
<rect x="6.35" y="5.9" width="1.3" height="4.2" fill="#d6dae3"/><rect x="6.35" y="3.7" width="1.3" height="1.3" fill="#d6dae3"/></svg>
<svg style="left:106.5px;top:616.6px" width="7" height="10" viewBox="0 0 7 10"><path d="M1.2 1 L5.6 5 L1.2 9" stroke="#dfe3ea" stroke-width="1.7" fill="none"/></svg>
<div class="a" style="left:160.2px;top:612.60px;height:18px;line-height:18px;font-size:14px;font-weight:700;color:#e8eaf0;font-family:'Liberation Sans', sans-serif;white-space:nowrap;transform:scaleX(0.9128);transform-origin:left center;">user</div>
<div class="a" style="left:195.8px;top:612.60px;height:18px;line-height:18px;font-size:14px;font-weight:400;color:#b3b9c7;font-family:'Liberation Sans', sans-serif;white-space:nowrap;transform:scaleX(0.9667);transform-origin:left center;">(245)</div>
<div class="a" style="right:1547.4px;top:612.60px;height:18px;line-height:18px;font-size:14px;font-weight:700;color:#e8eaf0;font-family:'Liberation Sans', sans-serif;white-space:nowrap;transform:scaleX(0.9651);transform-origin:right center;">1.1k</div>
<svg style="left:106.5px;top:658.7px" width="7" height="10" viewBox="0 0 7 10"><path d="M1.2 1 L5.6 5 L1.2 9" stroke="#dfe3ea" stroke-width="1.7" fill="none"/></svg>
<div class="a" style="left:160.2px;top:654.70px;height:18px;line-height:18px;font-size:14px;font-weight:700;color:#e8eaf0;font-family:'Liberation Sans', sans-serif;white-space:nowrap;transform:scaleX(0.9467);transform-origin:left center;">hostname</div>
<div class="a" style="left:231.7px;top:654.70px;height:18px;line-height:18px;font-size:14px;font-weight:400;color:#b3b9c7;font-family:'Liberation Sans', sans-serif;white-space:nowrap;transform:scaleX(0.9343);transform-origin:left center;">(7)</div>
<div class="a" style="right:1547.4px;top:654.70px;height:18px;line-height:18px;font-size:14px;font-weight:700;color:#e8eaf0;font-family:'Liberation Sans', sans-serif;white-space:nowrap;transform:scaleX(0.9651);transform-origin:right center;">1.1k</div>
<svg style="left:106.5px;top:700.3px" width="7" height="10" viewBox="0 0 7 10"><path d="M1.2 1 L5.6 5 L1.2 9" stroke="#dfe3ea" stroke-width="1.7" fill="none"/></svg>
<div class="a" style="left:160.2px;top:696.30px;height:18px;line-height:18px;font-size:14px;font-weight:700;color:#e8eaf0;font-family:'Liberation Sans', sans-serif;white-space:nowrap;transform:scaleX(0.9476);transform-origin:left center;">ip</div>
<div class="a" style="left:180.5px;top:696.30px;height:18px;line-height:18px;font-size:14px;font-weight:400;color:#b3b9c7;font-family:'Liberation Sans', sans-serif;white-space:nowrap;transform:scaleX(0.9757);transform-origin:left center;">(53)</div>
<div class="a" style="right:1547.4px;top:696.30px;height:18px;line-height:18px;font-size:14px;font-weight:700;color:#e8eaf0;font-family:'Liberation Sans', sans-serif;white-space:nowrap;transform:scaleX(0.9375);transform-origin:right center;">783</div>
<svg style="left:106.5px;top:742.3px" width="7" height="10" viewBox="0 0 7 10"><path d="M1.2 1 L5.6 5 L1.2 9" stroke="#dfe3ea" stroke-width="1.7" fill="none"/></svg>
<div class="a" style="left:160.2px;top:738.30px;height:18px;line-height:18px;font-size:14px;font-weight:700;color:#e8eaf0;font-family:'Liberation Sans', sans-serif;white-space:nowrap;transform:scaleX(0.9102);transform-origin:left center;">process_id</div>
<div class="a" style="left:236px;top:738.30px;height:18px;line-height:18px;font-size:14px;font-weight:400;color:#b3b9c7;font-family:'Liberation Sans', sans-serif;white-space:nowrap;transform:scaleX(0.9693);transform-origin:left center;">(3)</div>
<div class="a" style="right:1547.4px;top:738.30px;height:18px;line-height:18px;font-size:14px;font-weight:700;color:#e8eaf0;font-family:'Liberation Sans', sans-serif;white-space:nowrap;transform:scaleX(0.9375);transform-origin:right center;">757</div>
<svg style="left:106.5px;top:784.4px" width="7" height="10" viewBox="0 0 7 10"><path d="M1.2 1 L5.6 5 L1.2 9" stroke="#dfe3ea" stroke-width="1.7" fill="none"/></svg>
<div class="a" style="left:160.2px;top:780.40px;height:18px;line-height:18px;font-size:14px;font-weight:700;color:#e8eaf0;font-family:'Liberation Sans', sans-serif;white-space:nowrap;transform:scaleX(0.9726);transform-origin:left center;">file_path</div>
<div class="a" style="left:224.3px;top:780.40px;height:18px;line-height:18px;font-size:14px;font-weight:400;color:#b3b9c7;font-family:'Liberation Sans', sans-serif;white-space:nowrap;transform:scaleX(0.9810);transform-origin:left center;">(2)</div>
<div class="a" style="right:1547.4px;top:780.40px;height:18px;line-height:18px;font-size:14px;font-weight:700;color:#e8eaf0;font-family:'Liberation Sans', sans-serif;white-space:nowrap;transform:scaleX(0.9375);transform-origin:right center;">756</div>
<svg style="left:106.5px;top:825.8px" width="7" height="10" viewBox="0 0 7 10"><path d="M1.2 1 L5.6 5 L1.2 9" stroke="#dfe3ea" stroke-width="1.7" fill="none"/></svg>
<div class="a" style="left:160.2px;top:821.80px;height:18px;line-height:18px;font-size:14px;font-weight:700;color:#e8eaf0;font-family:'Liberation Sans', sans-serif;white-space:nowrap;transform:scaleX(0.9542);transform-origin:left center;">domain</div>
<div class="a" style="left:216.6px;top:821.80px;height:18px;line-height:18px;font-size:14px;font-weight:400;color:#b3b9c7;font-family:'Liberation Sans', sans-serif;white-space:nowrap;transform:scaleX(0.9810);transform-origin:left center;">(5)</div>
<div class="a" style="right:1547.4px;top:821.80px;height:18px;line-height:18px;font-size:14px;font-weight:700;color:#e8eaf0;font-family:'Liberation Sans', sans-serif;white-space:nowrap;transform:scaleX(0.9757);transform-origin:right center;">31</div>
<svg style="left:106.5px;top:918px" width="7" height="10" viewBox="0 0 7 10"><path d="M1.2 1 L5.6 5 L1.2 9" stroke="#dfe3ea" stroke-width="1.7" fill="none"/></svg>
<div class="a" style="left:160.2px;top:914.00px;height:18px;line-height:18px;font-size:14px;font-weight:700;color:#e8eaf0;font-family:'Liberation Sans', sans-serif;white-space:nowrap;transform:scaleX(0.9586);transform-origin:left center;">metadata.description</div>
<div class="a" style="left:304.1px;top:914.00px;height:18px;line-height:18px;font-size:14px;font-weight:400;color:#b3b9c7;font-family:'Liberation Sans', sans-serif;white-space:nowrap;transform:scaleX(0.9576);transform-origin:left center;">(321)</div>
<div class="a" style="right:1547.4px;top:914.00px;height:18px;line-height:18px;font-size:14px;font-weight:700;color:#e8eaf0;font-family:'Liberation Sans', sans-serif;white-space:nowrap;transform:scaleX(0.9651);transform-origin:right center;">1.1k</div>
<svg style="left:106.5px;top:959.8px" width="7" height="10" viewBox="0 0 7 10"><path d="M1.2 1 L5.6 5 L1.2 9" stroke="#dfe3ea" stroke-width="1.7" fill="none"/></svg>
<div class="a" style="left:160.2px;top:955.80px;height:18px;line-height:18px;font-size:14px;font-weight:700;color:#e8eaf0;font-family:'Liberation Sans', sans-serif;white-space:nowrap;transform:scaleX(0.9455);transform-origin:left center;">target.user.userid</div>
<div class="a" style="left:280.2px;top:955.80px;height:18px;line-height:18px;font-size:14px;font-weight:400;color:#b3b9c7;font-family:'Liberation Sans', sans-serif;white-space:nowrap;transform:scaleX(0.9576);transform-origin:left center;">(242)</div>
<div class="a" style="right:1547.4px;top:955.80px;height:18px;line-height:18px;font-size:14px;font-weight:700;color:#e8eaf0;font-family:'Liberation Sans', sans-serif;white-space:nowrap;transform:scaleX(0.9651);transform-origin:right center;">1.1k</div>
<svg style="left:106.5px;top:1001.6px" width="7" height="10" viewBox="0 0 7 10"><path d="M1.2 1 L5.6 5 L1.2 9" stroke="#dfe3ea" stroke-width="1.7" fill="none"/></svg>
<div class="a" style="left:160.2px;top:997.60px;height:18px;line-height:18px;font-size:14px;font-weight:700;color:#e8eaf0;font-family:'Liberation Sans', sans-serif;white-space:nowrap;transform:scaleX(0.9692);transform-origin:left center;">metadata.product_event_type</div>
<div class="a" style="left:361.3px;top:997.60px;height:18px;line-height:18px;font-size:14px;font-weight:400;color:#b3b9c7;font-family:'Liberation Sans', sans-serif;white-space:nowrap;transform:scaleX(0.9460);transform-origin:left center;">(6)</div>
<div class="a" style="right:1547.4px;top:997.60px;height:18px;line-height:18px;font-size:14px;font-weight:700;color:#e8eaf0;font-family:'Liberation Sans', sans-serif;white-space:nowrap;transform:scaleX(0.9651);transform-origin:right center;">1.1k</div>
<svg style="left:80px;top:877.0px" width="10" height="7" viewBox="0 0 10 7"><path d="M1 1.2 L5 5.4 L9 1.2" stroke="#8ab4f8" stroke-width="1.6" fill="none"/></svg>
<div class="a" style="left:105.8px;top:872.00px;height:18px;line-height:18px;font-size:14px;font-weight:400;color:#d6dae3;font-family:'Liberation Sans', sans-serif;white-space:nowrap;transform:scaleX(0.8774);transform-origin:left center;">UDM FIELDS</div>
<div class="a" style="left:486px;top:737px;width:6.6px;height:36.6px;background:#6272a0;border-radius:3.3px;"></div>
<div class="a" style="left:488.2px;top:744.9px;width:2.2px;height:2.2px;background:#e0e4f0;border-radius:1.1px;"></div>
<div class="a" style="left:488.2px;top:753.9px;width:2.2px;height:2.2px;background:#e0e4f0;border-radius:1.1px;"></div>
<div class="a" style="left:488.2px;top:762.9px;width:2.2px;height:2.2px;background:#e0e4f0;border-radius:1.1px;"></div>
<div class="a" style="left:494.2px;top:471.3px;width:1503.8px;height:560px;background:#222b43;border-radius:6px;"></div>
<div class="a" style="left:494.2px;top:471.3px;width:1503.8px;height:52.7px;background:#263250;border-radius:6px 6px 0 0;"></div>
<div class="a" style="left:514.2px;top:481px;width:79px;height:33.2px;background:#3a4a6e;border-radius:4px;"></div>
<div class="a" style="left:531.8px;top:489.00px;height:18px;line-height:18px;font-size:14px;font-weight:700;color:#eef0f5;font-family:'Liberation Sans', sans-serif;white-space:nowrap;transform:scaleX(0.9647);transform-origin:left center;">Events</div>
<div class="a" style="left:626.5px;top:489.00px;height:18px;line-height:18px;font-size:14px;font-weight:700;color:#cfd5e2;font-family:'Liberation Sans', sans-serif;white-space:nowrap;transform:scaleX(1.0078);transform-origin:left center;">Pivot</div>
<svg style="left:1567px;top:491px" width="13.5" height="13.5" viewBox="0 0 15 15">
<circle cx="6" cy="6" r="4.7" stroke="#c3cad8" stroke-width="1.9" fill="none"/><path d="M9.4 9.4 L13.6 13.6" stroke="#c3cad8" stroke-width="2.4"/></svg>
<div class="a" style="left:1595px;top:489.00px;height:18px;line-height:18px;font-size:14px;font-weight:400;color:#8d95a8;font-family:'Liberation Sans', sans-serif;white-space:nowrap;transform:scaleX(0.9352);transform-origin:left center;">Search...</div>
<div class="a" style="left:1553px;top:514px;width:189px;height:1.6px;background:#4a5c88;"></div>
<div class="a" style="left:1763px;top:485px;width:1.4px;height:25px;background:#3d4b70;"></div>
<svg style="left:1782.5px;top:491.5px" width="15" height="13" viewBox="0 0 15 13">
<rect x="0.8" y="0.8" width="13.4" height="11.4" stroke="#c5d1ee" stroke-width="1.5" fill="none"/>
<rect x="5.1" y="0.8" width="1.4" height="11.4" fill="#c5d1ee"/><rect x="8.5" y="0.8" width="1.4" height="11.4" fill="#c5d1ee"/></svg>
<div class="a" style="left:1805.4px;top:489.00px;height:18px;line-height:18px;font-size:14px;font-weight:700;color:#bccbef;font-family:'Liberation Sans', sans-serif;white-space:nowrap;transform:scaleX(0.9684);transform-origin:left center;">Columns</div>
<div class="a" style="left:1880.5px;top:485px;width:1.4px;height:25px;background:#3d4b70;"></div>
<svg style="left:1894px;top:491px" width="15" height="14" viewBox="0 0 15 14">
<rect x="0" y="0.3" width="14.5" height="1.5" fill="#c5d1ee"/>
<path d="M0 5.5 H11.5 A2.6 2.6 0 0 1 11.5 10.7 H7.5" stroke="#c5d1ee" stroke-width="1.5" fill="none"/>
<path d="M9.3 8.7 L7.2 10.7 L9.3 12.7" stroke="#c5d1ee" stroke-width="1.4" fill="none"/>
<rect x="0" y="10" width="5" height="1.5" fill="#c5d1ee"/></svg>
<svg style="left:1928px;top:490.5px" width="14" height="15" viewBox="0 0 14 15">
<path d="M7 0.5 V9.5 M3 5.8 L7 9.8 L11 5.8" stroke="#c5d1ee" stroke-width="1.6" fill="none"/>
<path d="M0.9 10 V12.2 Q0.9 13.8 2.5 13.8 H11.5 Q13.1 13.8 13.1 12.2 V10" stroke="#c5d1ee" stroke-width="1.6" fill="none"/></svg>
<svg style="left:1958px;top:491.5px" width="13" height="13" viewBox="0 0 13 13">
<path d="M7.2 1 H12 V5.8" stroke="#c5d1ee" stroke-width="2" fill="none"/>
<path d="M1 7.2 V12 H5.8" stroke="#c5d1ee" stroke-width="2" fill="none"/></svg>
<div class="a" style="left:502px;top:537.3px;width:1487.5px;height:447.5px;box-sizing:border-box;border:1.3px solid #34405e;"></div>
<div class="a" style="left:503px;top:538.3px;width:1474px;height:33.7px;background:#222c45;"></div>
<div class="a" style="left:515.8px;top:547.00px;height:15px;line-height:15px;font-size:11.5px;font-weight:700;color:#c8cdd9;font-family:'Liberation Sans', sans-serif;white-space:nowrap;transform:scaleX(0.9145);transform-origin:left center;">EVENT STATUS</div>
<div class="a" style="left:663.5px;top:547.00px;height:15px;line-height:15px;font-size:11.5px;font-weight:700;color:#c8cdd9;font-family:'Liberation Sans', sans-serif;white-space:nowrap;transform:scaleX(0.9346);transform-origin:left center;">TIMESTAMP</div>
<div class="a" style="left:884.4px;top:547.00px;height:15px;line-height:15px;font-size:11.5px;font-weight:700;color:#c8cdd9;font-family:'Liberation Sans', sans-serif;white-space:nowrap;transform:scaleX(0.8919);transform-origin:left center;">TYPE</div>
<div class="a" style="left:1105.5px;top:547.00px;height:15px;line-height:15px;font-size:11.5px;font-weight:700;color:#c8cdd9;font-family:'Liberation Sans', sans-serif;white-space:nowrap;transform:scaleX(0.9220);transform-origin:left center;">SUMMARY</div>
<div class="a" style="left:1326.6px;top:547.00px;height:15px;line-height:15px;font-size:11.5px;font-weight:700;color:#c8cdd9;font-family:'Liberation Sans', sans-serif;white-space:nowrap;transform:scaleX(0.8951);transform-origin:left center;">USER</div>
<div class="a" style="left:1547.4px;top:547.00px;height:15px;line-height:15px;font-size:11.5px;font-weight:700;color:#c8cdd9;font-family:'Liberation Sans', sans-serif;white-space:nowrap;transform:scaleX(0.9330);transform-origin:left center;">HOSTNAME</div>
<div class="a" style="left:1768.8px;top:547.00px;height:15px;line-height:15px;font-size:11.5px;font-weight:700;color:#c8cdd9;font-family:'Liberation Sans', sans-serif;white-space:nowrap;transform:scaleX(0.8993);transform-origin:left center;">PROCESS NAME</div>
<div class="a" style="left:503px;top:572px;width:1474px;height:46px;background:#181b27;"></div>
<div class="a" style="left:663.5px;top:586.00px;height:18px;line-height:18px;font-size:14px;font-weight:400;color:#e3e5ea;font-family:'Liberation Sans', sans-serif;white-space:nowrap;transform:scaleX(0.9313);transform-origin:left center;">2026-04-14T21:47:40.208</div>
<div class="a" style="left:886px;top:586.8px;width:82.5px;height:19.2px;border-radius:4px;box-sizing:border-box;border:1.9px solid #9a30e2;"></div>
<div class="a" style="left:895.8px;top:589.10px;height:15px;line-height:15px;font-size:11.5px;font-weight:700;color:#bb48f2;font-family:'Liberation Sans', sans-serif;white-space:nowrap;transform:scaleX(0.8426);transform-origin:left center;">USER_LOGIN</div>
<div class="a" style="left:973px;top:586.8px;width:106px;height:19.2px;border-radius:4px;box-sizing:border-box;border:1.9px solid #c0c2c8;"></div>
<div class="a" style="left:982.5px;top:589.10px;height:15px;line-height:15px;font-size:11.5px;font-weight:700;color:#f4f5f8;font-family:'Liberation Sans', sans-serif;white-space:nowrap;transform:scaleX(0.8642);transform-origin:left center;">AUTH_VIOLATION</div>
<div class="a" style="left:1105.5px;top:586.00px;height:18px;line-height:18px;font-size:14px;font-weight:400;color:#e3e5ea;font-family:'Liberation Sans', sans-serif;white-space:nowrap;transform:scaleX(0.8982);transform-origin:left center;">STOCK - 94.26.68.55</div>
<div class="a" style="left:1326.6px;top:586.00px;height:18px;line-height:18px;font-size:14px;font-weight:400;color:#e3e5ea;font-family:'Liberation Sans', sans-serif;white-space:nowrap;transform:scaleX(0.9210);transform-origin:left center;">S-1-0-0</div>
<div class="a" style="left:1547.4px;top:594.6px;width:11.2px;height:2.0px;background:#b3b6be;"></div>
<div class="a" style="left:1768.8px;top:586.00px;height:18px;line-height:18px;font-size:14px;font-weight:400;color:#e3e5ea;font-family:'Liberation Sans', sans-serif;white-space:nowrap;transform:scaleX(0.9518);transform-origin:left center;">NtLmSsp</div>
<div class="a" style="left:503px;top:618px;width:1474px;height:46px;background:#1f2537;"></div>
<div class="a" style="left:663.5px;top:632.00px;height:18px;line-height:18px;font-size:14px;font-weight:400;color:#e3e5ea;font-family:'Liberation Sans', sans-serif;white-space:nowrap;transform:scaleX(0.9313);transform-origin:left center;">2026-04-14T21:47:16.099</div>
<div class="a" style="left:886px;top:632.8px;width:82.5px;height:19.2px;border-radius:4px;box-sizing:border-box;border:1.9px solid #9a30e2;"></div>
<div class="a" style="left:895.8px;top:635.10px;height:15px;line-height:15px;font-size:11.5px;font-weight:700;color:#bb48f2;font-family:'Liberation Sans', sans-serif;white-space:nowrap;transform:scaleX(0.8426);transform-origin:left center;">USER_LOGIN</div>
<div class="a" style="left:973px;top:632.8px;width:106px;height:19.2px;border-radius:4px;box-sizing:border-box;border:1.9px solid #c0c2c8;"></div>
<div class="a" style="left:982.5px;top:635.10px;height:15px;line-height:15px;font-size:11.5px;font-weight:700;color:#f4f5f8;font-family:'Liberation Sans', sans-serif;white-space:nowrap;transform:scaleX(0.8642);transform-origin:left center;">AUTH_VIOLATION</div>
<div class="a" style="left:1105.5px;top:632.00px;height:18px;line-height:18px;font-size:14px;font-weight:400;color:#e3e5ea;font-family:'Liberation Sans', sans-serif;white-space:nowrap;transform:scaleX(0.9136);transform-origin:left center;">ADMINISTRATOR - 216.24.213....</div>
<div class="a" style="left:1326.6px;top:632.00px;height:18px;line-height:18px;font-size:14px;font-weight:400;color:#e3e5ea;font-family:'Liberation Sans', sans-serif;white-space:nowrap;transform:scaleX(0.9210);transform-origin:left center;">S-1-0-0</div>
<div class="a" style="left:1547.4px;top:640.6px;width:11.2px;height:2.0px;background:#b3b6be;"></div>
<div class="a" style="left:1768.8px;top:632.00px;height:18px;line-height:18px;font-size:14px;font-weight:400;color:#e3e5ea;font-family:'Liberation Sans', sans-serif;white-space:nowrap;transform:scaleX(0.9518);transform-origin:left center;">NtLmSsp</div>
<div class="a" style="left:503px;top:664px;width:1474px;height:46px;background:#181b27;"></div>
<div class="a" style="left:663.5px;top:678.00px;height:18px;line-height:18px;font-size:14px;font-weight:400;color:#e3e5ea;font-family:'Liberation Sans', sans-serif;white-space:nowrap;transform:scaleX(0.9313);transform-origin:left center;">2026-04-14T21:47:14.634</div>
<div class="a" style="left:886px;top:678.8px;width:82.5px;height:19.2px;border-radius:4px;box-sizing:border-box;border:1.9px solid #9a30e2;"></div>
<div class="a" style="left:895.8px;top:681.10px;height:15px;line-height:15px;font-size:11.5px;font-weight:700;color:#bb48f2;font-family:'Liberation Sans', sans-serif;white-space:nowrap;transform:scaleX(0.8426);transform-origin:left center;">USER_LOGIN</div>
<div class="a" style="left:973px;top:678.8px;width:106px;height:19.2px;border-radius:4px;box-sizing:border-box;border:1.9px solid #c0c2c8;"></div>
<div class="a" style="left:982.5px;top:681.10px;height:15px;line-height:15px;font-size:11.5px;font-weight:700;color:#f4f5f8;font-family:'Liberation Sans', sans-serif;white-space:nowrap;transform:scaleX(0.8642);transform-origin:left center;">AUTH_VIOLATION</div>
<div class="a" style="left:1105.5px;top:678.00px;height:18px;line-height:18px;font-size:14px;font-weight:400;color:#e3e5ea;font-family:'Liberation Sans', sans-serif;white-space:nowrap;transform:scaleX(0.9863);transform-origin:left center;">Sarath - workstation</div>
<div class="a" style="left:1326.6px;top:678.00px;height:18px;line-height:18px;font-size:14px;font-weight:400;color:#e3e5ea;font-family:'Liberation Sans', sans-serif;white-space:nowrap;transform:scaleX(0.9210);transform-origin:left center;">S-1-0-0</div>
<div class="a" style="left:1547.4px;top:678.00px;height:18px;line-height:18px;font-size:14px;font-weight:400;color:#e3e5ea;font-family:'Liberation Sans', sans-serif;white-space:nowrap;transform:scaleX(1.0168);transform-origin:left center;">workstation</div>
<div class="a" style="left:1768.8px;top:678.00px;height:18px;line-height:18px;font-size:14px;font-weight:400;color:#e3e5ea;font-family:'Liberation Sans', sans-serif;white-space:nowrap;transform:scaleX(0.9518);transform-origin:left center;">NtLmSsp</div>
<div class="a" style="left:503px;top:710px;width:1474px;height:46px;background:#1f2537;"></div>
<div class="a" style="left:663.5px;top:724.00px;height:18px;line-height:18px;font-size:14px;font-weight:400;color:#e3e5ea;font-family:'Liberation Sans', sans-serif;white-space:nowrap;transform:scaleX(0.9313);transform-origin:left center;">2026-04-14T21:47:02.035</div>
<div class="a" style="left:886px;top:724.8px;width:82.5px;height:19.2px;border-radius:4px;box-sizing:border-box;border:1.9px solid #9a30e2;"></div>
<div class="a" style="left:895.8px;top:727.10px;height:15px;line-height:15px;font-size:11.5px;font-weight:700;color:#bb48f2;font-family:'Liberation Sans', sans-serif;white-space:nowrap;transform:scaleX(0.8426);transform-origin:left center;">USER_LOGIN</div>
<div class="a" style="left:973px;top:724.8px;width:106px;height:19.2px;border-radius:4px;box-sizing:border-box;border:1.9px solid #c0c2c8;"></div>
<div class="a" style="left:982.5px;top:727.10px;height:15px;line-height:15px;font-size:11.5px;font-weight:700;color:#f4f5f8;font-family:'Liberation Sans', sans-serif;white-space:nowrap;transform:scaleX(0.8642);transform-origin:left center;">AUTH_VIOLATION</div>
<div class="a" style="left:1105.5px;top:724.00px;height:18px;line-height:18px;font-size:14px;font-weight:400;color:#e3e5ea;font-family:'Liberation Sans', sans-serif;white-space:nowrap;transform:scaleX(0.8785);transform-origin:left center;">CONFERENCE - 94.26.68.55</div>
<div class="a" style="left:1326.6px;top:724.00px;height:18px;line-height:18px;font-size:14px;font-weight:400;color:#e3e5ea;font-family:'Liberation Sans', sans-serif;white-space:nowrap;transform:scaleX(0.9210);transform-origin:left center;">S-1-0-0</div>
<div class="a" style="left:1547.4px;top:732.6px;width:11.2px;height:2.0px;background:#b3b6be;"></div>
<div class="a" style="left:1768.8px;top:724.00px;height:18px;line-height:18px;font-size:14px;font-weight:400;color:#e3e5ea;font-family:'Liberation Sans', sans-serif;white-space:nowrap;transform:scaleX(0.9518);transform-origin:left center;">NtLmSsp</div>
<div class="a" style="left:503px;top:756px;width:1474px;height:46px;background:#181b27;"></div>
<div class="a" style="left:663.5px;top:770.00px;height:18px;line-height:18px;font-size:14px;font-weight:400;color:#e3e5ea;font-family:'Liberation Sans', sans-serif;white-space:nowrap;transform:scaleX(0.9313);transform-origin:left center;">2026-04-14T21:46:52.458</div>
<div class="a" style="left:886px;top:770.8px;width:82.5px;height:19.2px;border-radius:4px;box-sizing:border-box;border:1.9px solid #9a30e2;"></div>
<div class="a" style="left:895.8px;top:773.10px;height:15px;line-height:15px;font-size:11.5px;font-weight:700;color:#bb48f2;font-family:'Liberation Sans', sans-serif;white-space:nowrap;transform:scaleX(0.8426);transform-origin:left center;">USER_LOGIN</div>
<div class="a" style="left:973px;top:770.8px;width:106px;height:19.2px;border-radius:4px;box-sizing:border-box;border:1.9px solid #c0c2c8;"></div>
<div class="a" style="left:982.5px;top:773.10px;height:15px;line-height:15px;font-size:11.5px;font-weight:700;color:#f4f5f8;font-family:'Liberation Sans', sans-serif;white-space:nowrap;transform:scaleX(0.8642);transform-origin:left center;">AUTH_VIOLATION</div>
<div class="a" style="left:1105.5px;top:770.00px;height:18px;line-height:18px;font-size:14px;font-weight:400;color:#e3e5ea;font-family:'Liberation Sans', sans-serif;white-space:nowrap;transform:scaleX(0.8853);transform-origin:left center;">COLLEDGE - 94.26.68.55</div>
<div class="a" style="left:1326.6px;top:770.00px;height:18px;line-height:18px;font-size:14px;font-weight:400;color:#e3e5ea;font-family:'Liberation Sans', sans-serif;white-space:nowrap;transform:scaleX(0.9210);transform-origin:left center;">S-1-0-0</div>
<div class="a" style="left:1547.4px;top:778.6px;width:11.2px;height:2.0px;background:#b3b6be;"></div>
<div class="a" style="left:1768.8px;top:770.00px;height:18px;line-height:18px;font-size:14px;font-weight:400;color:#e3e5ea;font-family:'Liberation Sans', sans-serif;white-space:nowrap;transform:scaleX(0.9518);transform-origin:left center;">NtLmSsp</div>
<div class="a" style="left:503px;top:802px;width:1474px;height:46px;background:#1f2537;"></div>
<div class="a" style="left:663.5px;top:816.00px;height:18px;line-height:18px;font-size:14px;font-weight:400;color:#e3e5ea;font-family:'Liberation Sans', sans-serif;white-space:nowrap;transform:scaleX(0.9313);transform-origin:left center;">2026-04-14T21:46:51.895</div>
<div class="a" style="left:886px;top:816.8px;width:82.5px;height:19.2px;border-radius:4px;box-sizing:border-box;border:1.9px solid #9a30e2;"></div>
<div class="a" style="left:895.8px;top:819.10px;height:15px;line-height:15px;font-size:11.5px;font-weight:700;color:#bb48f2;font-family:'Liberation Sans', sans-serif;white-space:nowrap;transform:scaleX(0.8426);transform-origin:left center;">USER_LOGIN</div>
<div class="a" style="left:973px;top:816.8px;width:106px;height:19.2px;border-radius:4px;box-sizing:border-box;border:1.9px solid #c0c2c8;"></div>
<div class="a" style="left:982.5px;top:819.10px;height:15px;line-height:15px;font-size:11.5px;font-weight:700;color:#f4f5f8;font-family:'Liberation Sans', sans-serif;white-space:nowrap;transform:scaleX(0.8642);transform-origin:left center;">AUTH_VIOLATION</div>
<div class="a" style="left:1105.5px;top:816.00px;height:18px;line-height:18px;font-size:14px;font-weight:400;color:#e3e5ea;font-family:'Liberation Sans', sans-serif;white-space:nowrap;transform:scaleX(0.8958);transform-origin:left center;">ADMINISTRATOR - 20.57.167.231</div>
<div class="a" style="left:1326.6px;top:816.00px;height:18px;line-height:18px;font-size:14px;font-weight:400;color:#e3e5ea;font-family:'Liberation Sans', sans-serif;white-space:nowrap;transform:scaleX(0.9210);transform-origin:left center;">S-1-0-0</div>
<div class="a" style="left:1547.4px;top:824.6px;width:11.2px;height:2.0px;background:#b3b6be;"></div>
<div class="a" style="left:1768.8px;top:816.00px;height:18px;line-height:18px;font-size:14px;font-weight:400;color:#e3e5ea;font-family:'Liberation Sans', sans-serif;white-space:nowrap;transform:scaleX(0.9518);transform-origin:left center;">NtLmSsp</div>
<div class="a" style="left:503px;top:848px;width:1474px;height:46px;background:#181b27;"></div>
<div class="a" style="left:663.5px;top:862.00px;height:18px;line-height:18px;font-size:14px;font-weight:400;color:#e3e5ea;font-family:'Liberation Sans', sans-serif;white-space:nowrap;transform:scaleX(0.9313);transform-origin:left center;">2026-04-14T21:46:45.371</div>
<div class="a" style="left:886px;top:862.8px;width:82.5px;height:19.2px;border-radius:4px;box-sizing:border-box;border:1.9px solid #9a30e2;"></div>
<div class="a" style="left:895.8px;top:865.10px;height:15px;line-height:15px;font-size:11.5px;font-weight:700;color:#bb48f2;font-family:'Liberation Sans', sans-serif;white-space:nowrap;transform:scaleX(0.8426);transform-origin:left center;">USER_LOGIN</div>
<div class="a" style="left:973px;top:862.8px;width:106px;height:19.2px;border-radius:4px;box-sizing:border-box;border:1.9px solid #c0c2c8;"></div>
<div class="a" style="left:982.5px;top:865.10px;height:15px;line-height:15px;font-size:11.5px;font-weight:700;color:#f4f5f8;font-family:'Liberation Sans', sans-serif;white-space:nowrap;transform:scaleX(0.8642);transform-origin:left center;">AUTH_VIOLATION</div>
<div class="a" style="left:1105.5px;top:862.00px;height:18px;line-height:18px;font-size:14px;font-weight:400;color:#e3e5ea;font-family:'Liberation Sans', sans-serif;white-space:nowrap;transform:scaleX(0.9040);transform-origin:left center;">TEST - 180.76.237.47</div>
<div class="a" style="left:1326.6px;top:862.00px;height:18px;line-height:18px;font-size:14px;font-weight:400;color:#e3e5ea;font-family:'Liberation Sans', sans-serif;white-space:nowrap;transform:scaleX(0.9210);transform-origin:left center;">S-1-0-0</div>
<div class="a" style="left:1547.4px;top:870.6px;width:11.2px;height:2.0px;background:#b3b6be;"></div>
<div class="a" style="left:1768.8px;top:862.00px;height:18px;line-height:18px;font-size:14px;font-weight:400;color:#e3e5ea;font-family:'Liberation Sans', sans-serif;white-space:nowrap;transform:scaleX(0.9518);transform-origin:left center;">NtLmSsp</div>
<div class="a" style="left:503px;top:894px;width:1474px;height:46px;background:#1f2537;"></div>
<div class="a" style="left:663.5px;top:908.00px;height:18px;line-height:18px;font-size:14px;font-weight:400;color:#e3e5ea;font-family:'Liberation Sans', sans-serif;white-space:nowrap;transform:scaleX(0.9313);transform-origin:left center;">2026-04-14T21:46:42.821</div>
<div class="a" style="left:886px;top:908.8px;width:82.5px;height:19.2px;border-radius:4px;box-sizing:border-box;border:1.9px solid #9a30e2;"></div>
<div class="a" style="left:895.8px;top:911.10px;height:15px;line-height:15px;font-size:11.5px;font-weight:700;color:#bb48f2;font-family:'Liberation Sans', sans-serif;white-space:nowrap;transform:scaleX(0.8426);transform-origin:left center;">USER_LOGIN</div>
<div class="a" style="left:973px;top:908.8px;width:106px;height:19.2px;border-radius:4px;box-sizing:border-box;border:1.9px solid #c0c2c8;"></div>
<div class="a" style="left:982.5px;top:911.10px;height:15px;line-height:15px;font-size:11.5px;font-weight:700;color:#f4f5f8;font-family:'Liberation Sans', sans-serif;white-space:nowrap;transform:scaleX(0.8642);transform-origin:left center;">AUTH_VIOLATION</div>
<div class="a" style="left:1105.5px;top:908.00px;height:18px;line-height:18px;font-size:14px;font-weight:400;color:#e3e5ea;font-family:'Liberation Sans', sans-serif;white-space:nowrap;transform:scaleX(0.9034);transform-origin:left center;">SCHOOL - 94.26.68.55</div>
<div class="a" style="left:1326.6px;top:908.00px;height:18px;line-height:18px;font-size:14px;font-weight:400;color:#e3e5ea;font-family:'Liberation Sans', sans-serif;white-space:nowrap;transform:scaleX(0.9210);transform-origin:left center;">S-1-0-0</div>
<div class="a" style="left:1547.4px;top:916.6px;width:11.2px;height:2.0px;background:#b3b6be;"></div>
<div class="a" style="left:1768.8px;top:908.00px;height:18px;line-height:18px;font-size:14px;font-weight:400;color:#e3e5ea;font-family:'Liberation Sans', sans-serif;white-space:nowrap;transform:scaleX(0.9518);transform-origin:left center;">NtLmSsp</div>
<div class="a" style="left:503px;top:940px;width:1474px;height:43.299999999999955px;background:#181b27;"></div>
<div class="a" style="left:663.5px;top:954.00px;height:18px;line-height:18px;font-size:14px;font-weight:400;color:#e3e5ea;font-family:'Liberation Sans', sans-serif;white-space:nowrap;transform:scaleX(0.9313);transform-origin:left center;">2026-04-14T21:46:36.753</div>
<div class="a" style="left:886px;top:954.8px;width:82.5px;height:19.2px;border-radius:4px;box-sizing:border-box;border:1.9px solid #9a30e2;"></div>
<div class="a" style="left:895.8px;top:957.10px;height:15px;line-height:15px;font-size:11.5px;font-weight:700;color:#bb48f2;font-family:'Liberation Sans', sans-serif;white-space:nowrap;transform:scaleX(0.8426);transform-origin:left center;">USER_LOGIN</div>
<div class="a" style="left:973px;top:954.8px;width:106px;height:19.2px;border-radius:4px;box-sizing:border-box;border:1.9px solid #c0c2c8;"></div>
<div class="a" style="left:982.5px;top:957.10px;height:15px;line-height:15px;font-size:11.5px;font-weight:700;color:#f4f5f8;font-family:'Liberation Sans', sans-serif;white-space:nowrap;transform:scaleX(0.8642);transform-origin:left center;">AUTH_VIOLATION</div>
<div class="a" style="left:1105.5px;top:954.00px;height:18px;line-height:18px;font-size:14px;font-weight:400;color:#e3e5ea;font-family:'Liberation Sans', sans-serif;white-space:nowrap;transform:scaleX(0.9136);transform-origin:left center;">ADMINISTRATOR - 216.24.213....</div>
<div class="a" style="left:1326.6px;top:954.00px;height:18px;line-height:18px;font-size:14px;font-weight:400;color:#e3e5ea;font-family:'Liberation Sans', sans-serif;white-space:nowrap;transform:scaleX(0.9210);transform-origin:left center;">S-1-0-0</div>
<div class="a" style="left:1547.4px;top:962.6px;width:11.2px;height:2.0px;background:#b3b6be;"></div>
<div class="a" style="left:1768.8px;top:954.00px;height:18px;line-height:18px;font-size:14px;font-weight:400;color:#e3e5ea;font-family:'Liberation Sans', sans-serif;white-space:nowrap;transform:scaleX(0.9518);transform-origin:left center;">NtLmSsp</div>
<div class="a" style="left:1977px;top:538.3px;width:11px;height:445px;background:#222c45;"></div>
<div class="a" style="left:1980.4px;top:541px;width:5.8px;height:39.7px;background:#6373a3;border-radius:2.9px;"></div>
<div class="a" style="left:502px;top:996.50px;height:18px;line-height:18px;font-size:14px;font-weight:400;color:#c8cdd9;font-family:'Liberation Sans', sans-serif;white-space:nowrap;transform:scaleX(0.9451);transform-origin:left center;">Rows per page</div>
<div class="a" style="left:600px;top:994px;width:134.5px;height:22.8px;border-radius:3px;box-sizing:border-box;border:1px solid #5a72a8;"></div>
<div class="a" style="left:608.5px;top:997.50px;height:16px;line-height:16px;font-size:12px;font-weight:400;color:#c8cdd9;font-family:'Liberation Sans', sans-serif;white-space:nowrap;transform:scaleX(0.8986);transform-origin:left center;">100</div>
<svg style="left:715px;top:1001.5px" width="13" height="8" viewBox="0 0 13 8"><path d="M1 1 L6.5 6.5 L12 1" stroke="#dfe3ea" stroke-width="1.7" fill="none"/></svg>
<div class="a" style="left:744px;top:996.50px;height:18px;line-height:18px;font-size:14px;font-weight:400;color:#dfe3ea;font-family:'Liberation Sans', sans-serif;white-space:nowrap;transform:scaleX(0.9975);transform-origin:left center;"><b>1</b> to <b>100</b> of <b>1075</b></div>
<svg style="left:877px;top:998.5px" width="14" height="14" viewBox="0 0 14 14"><rect x="0.6" y="0.8" width="1.8" height="12.4" fill="#a3a7b3"/><path d="M12.3 1.2 L6.6 7 L12.3 12.8" stroke="#a3a7b3" stroke-width="1.9" fill="none"/></svg>
<svg style="left:913px;top:998.5px" width="10" height="14" viewBox="0 0 10 14"><path d="M8 1.2 L2.4 7 L8 12.8" stroke="#a3a7b3" stroke-width="1.9" fill="none"/></svg>
<div class="a" style="left:447.70000000000005px;width:1000px;text-align:center;top:996.00px;height:16px;"><span style="display:inline-block;line-height:16px;font-size:13.5px;font-weight:400;color:#8ab4f8;font-family:'Liberation Sans', sans-serif;white-space:nowrap;">1</span></div>
<div class="a" style="left:472.6500000000001px;width:1000px;text-align:center;top:996.00px;height:16px;"><span style="display:inline-block;line-height:16px;font-size:13.5px;font-weight:400;color:#c8cdd9;font-family:'Liberation Sans', sans-serif;white-space:nowrap;">2</span></div>
<div class="a" style="left:497.6px;width:1000px;text-align:center;top:996.00px;height:16px;"><span style="display:inline-block;line-height:16px;font-size:13.5px;font-weight:400;color:#c8cdd9;font-family:'Liberation Sans', sans-serif;white-space:nowrap;">3</span></div>
<div class="a" style="left:522.5500000000001px;width:1000px;text-align:center;top:996.00px;height:16px;"><span style="display:inline-block;line-height:16px;font-size:13.5px;font-weight:400;color:#c8cdd9;font-family:'Liberation Sans', sans-serif;white-space:nowrap;">4</span></div>
<div class="a" style="left:547.5px;width:1000px;text-align:center;top:996.00px;height:16px;"><span style="display:inline-block;line-height:16px;font-size:13.5px;font-weight:400;color:#c8cdd9;font-family:'Liberation Sans', sans-serif;white-space:nowrap;">5</span></div>
<div class="a" style="left:572.45px;width:1000px;text-align:center;top:996.00px;height:16px;"><span style="display:inline-block;line-height:16px;font-size:13.5px;font-weight:400;color:#c8cdd9;font-family:'Liberation Sans', sans-serif;white-space:nowrap;">6</span></div>
<div class="a" style="left:597.4000000000001px;width:1000px;text-align:center;top:996.00px;height:16px;"><span style="display:inline-block;line-height:16px;font-size:13.5px;font-weight:400;color:#c8cdd9;font-family:'Liberation Sans', sans-serif;white-space:nowrap;">7</span></div>
<div class="a" style="left:622.3500000000001px;width:1000px;text-align:center;top:996.00px;height:16px;"><span style="display:inline-block;line-height:16px;font-size:13.5px;font-weight:400;color:#c8cdd9;font-family:'Liberation Sans', sans-serif;white-space:nowrap;">8</span></div>
<div class="a" style="left:647.3px;width:1000px;text-align:center;top:996.00px;height:16px;"><span style="display:inline-block;line-height:16px;font-size:13.5px;font-weight:400;color:#c8cdd9;font-family:'Liberation Sans', sans-serif;white-space:nowrap;">9</span></div>
<div class="a" style="left:672.25px;width:1000px;text-align:center;top:996.00px;height:16px;"><span style="display:inline-block;line-height:16px;font-size:13.5px;font-weight:400;color:#c8cdd9;font-family:'Liberation Sans', sans-serif;white-space:nowrap;">10</span></div>
<div class="a" style="left:705.8px;width:1000px;text-align:center;top:993.50px;height:16px;"><span style="display:inline-block;line-height:16px;font-size:15.5px;font-weight:700;color:#c8cdd9;font-family:'Liberation Sans', sans-serif;white-space:nowrap;">...</span></div>
<svg style="left:1235px;top:998.5px" width="10" height="14" viewBox="0 0 10 14"><path d="M2 1.2 L7.6 7 L2 12.8" stroke="#f0f2f6" stroke-width="2" fill="none"/></svg>
<svg style="left:1268px;top:998.5px" width="14" height="14" viewBox="0 0 14 14"><rect x="11.6" y="0.8" width="2" height="12.4" fill="#f0f2f6"/><path d="M1.7 1.2 L7.4 7 L1.7 12.8" stroke="#f0f2f6" stroke-width="2" fill="none"/></svg>
</div></body></html>
